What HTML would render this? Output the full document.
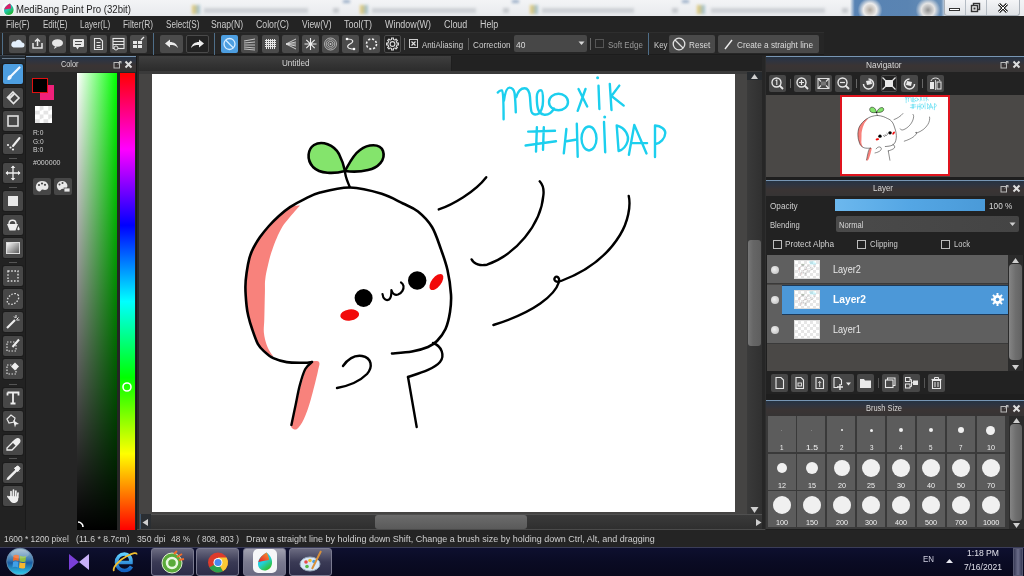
<!DOCTYPE html>
<html><head><meta charset="utf-8">
<style>
*{box-sizing:border-box;margin:0;padding:0}
html,body{width:1024px;height:576px;overflow:hidden;background:#1e1e1e;font-family:"Liberation Sans",sans-serif}
.a{position:absolute}
.t{position:absolute;white-space:pre;line-height:1;transform-origin:0 0;font-family:"Liberation Sans",sans-serif}
</style></head><body>
<div class="a" style="left:0px;top:0px;width:1024px;height:16px;background:linear-gradient(#f3f4f6,#e8eaed)"></div><div class="a" style="left:204px;top:8px;width:104px;height:5px;background:#c4c8cd;filter:blur(1.5px);opacity:.75"></div><div class="a" style="left:372px;top:8px;width:104px;height:5px;background:#c4c8cd;filter:blur(1.5px);opacity:.75"></div><div class="a" style="left:542px;top:8px;width:92px;height:5px;background:#c4c8cd;filter:blur(1.5px);opacity:.75"></div><div class="a" style="left:711px;top:8px;width:114px;height:5px;background:#c4c8cd;filter:blur(1.5px);opacity:.75"></div><div class="a" style="left:333px;top:8px;width:6px;height:5px;background:#b8bcc0;filter:blur(1.5px);opacity:.7"></div><div class="a" style="left:503px;top:8px;width:6px;height:5px;background:#b8bcc0;filter:blur(1.5px);opacity:.7"></div><div class="a" style="left:672px;top:8px;width:6px;height:5px;background:#b8bcc0;filter:blur(1.5px);opacity:.7"></div><div class="a" style="left:842px;top:8px;width:6px;height:5px;background:#b8bcc0;filter:blur(1.5px);opacity:.7"></div><div class="a" style="left:192px;top:5px;width:8px;height:9px;background:linear-gradient(90deg,#e8c040,#80b0d0);filter:blur(1.5px);opacity:.75"></div><div class="a" style="left:360px;top:5px;width:8px;height:9px;background:linear-gradient(90deg,#e8c040,#80b0d0);filter:blur(1.5px);opacity:.75"></div><div class="a" style="left:530px;top:5px;width:8px;height:9px;background:linear-gradient(90deg,#e8c040,#80b0d0);filter:blur(1.5px);opacity:.75"></div><div class="a" style="left:697px;top:5px;width:8px;height:9px;background:linear-gradient(90deg,#e8c040,#80b0d0);filter:blur(1.5px);opacity:.75"></div><div class="a" style="left:343px;top:0px;width:7px;height:3px;background:#6080a8;filter:blur(1.5px);opacity:.6"></div><div class="a" style="left:512px;top:0px;width:7px;height:3px;background:#6080a8;filter:blur(1.5px);opacity:.6"></div><div class="a" style="left:682px;top:0px;width:7px;height:3px;background:#6080a8;filter:blur(1.5px);opacity:.6"></div><div class="a" style="left:850px;top:0px;width:96px;height:16px;background:linear-gradient(90deg,rgba(88,131,180,0),#5883b4 5%,#5a84b2 60%,#6a90b8 95%,rgba(106,144,184,0))"></div><div class="a" style="left:857px;top:-2px;width:26px;height:20px;background:radial-gradient(circle at 50% 60%,#b0a89e 0,#ecebea 38%,rgba(236,235,234,0) 70%)"></div><div class="a" style="left:915px;top:-2px;width:26px;height:20px;background:radial-gradient(circle at 50% 60%,#909090 0,#e4e4e4 38%,rgba(228,228,228,0) 70%)"></div><svg class="a" style="left:1px;top:1px;" width="15" height="15" viewBox="0 0 15 15"><defs><linearGradient id="tbd" x1="0" y1="0" x2=".6" y2="1"><stop offset="0" stop-color="#1aa8c8"/><stop offset=".55" stop-color="#22c8b0"/><stop offset="1" stop-color="#20b030"/></linearGradient></defs><circle cx="7.5" cy="8" r="6.5" fill="#fff" opacity=".7"/><path d="M9 2.5 C12 5 13 7.5 12.5 10 C12 12.5 10 14 7.5 14 C4.5 14 3 12 3 9.5 C3 6.5 5.5 4 9 2.5Z" fill="url(#tbd)"/><path d="M9 2.5 C6.5 3.8 4 5.8 3.2 8.5 C5 8 7.5 8 10 7.5 C10 5.5 9.8 4 9 2.5Z" fill="#d8206a"/></svg><div class="t" style="left:16.30px;top:3.71px;font-size:10.5px;color:#1e1e1e;font-weight:400;transform:scaleX(0.912);">MediBang Paint Pro (32bit)</div><div class="a" style="left:944px;top:0px;width:76px;height:16px;background:linear-gradient(#f4f5f7,#dfe2e6);border:1px solid #a9b0b8;border-top:none;border-radius:0 0 3px 3px"></div><div class="a" style="left:965px;top:0px;width:1px;height:15px;background:#b5bcc4"></div><div class="a" style="left:986px;top:0px;width:1px;height:15px;background:#b5bcc4"></div><div class="a" style="left:949px;top:8px;width:11px;height:3px;background:#fff;border:1px solid #333"></div><svg class="a" style="left:970px;top:2px;" width="12" height="12" viewBox="0 0 12 12"><rect x="3.5" y="1.5" width="6" height="6" fill="none" stroke="#333" stroke-width="1.4"/><rect x="1.5" y="3.5" width="6" height="6" fill="#eee" stroke="#333" stroke-width="1.4"/><rect x="3.5" y="5.5" width="2" height="2" fill="#333"/></svg><svg class="a" style="left:996px;top:2px;" width="14" height="12" viewBox="0 0 14 12"><path d="M3 2 L11 10 M11 2 L3 10" stroke="#222" stroke-width="3"/><path d="M3 2 L11 10 M11 2 L3 10" stroke="#fff" stroke-width="1"/></svg><div class="a" style="left:0px;top:16px;width:1024px;height:16px;background:#232323"></div><div class="t" style="left:6.25px;top:20.34px;font-size:10px;color:#cdcdcd;font-weight:400;transform:scaleX(0.813);">File(F)</div><div class="t" style="left:42.50px;top:20.34px;font-size:10px;color:#cdcdcd;font-weight:400;transform:scaleX(0.802);">Edit(E)</div><div class="t" style="left:79.70px;top:20.34px;font-size:10px;color:#cdcdcd;font-weight:400;transform:scaleX(0.813);">Layer(L)</div><div class="t" style="left:123.00px;top:20.34px;font-size:10px;color:#cdcdcd;font-weight:400;transform:scaleX(0.831);">Filter(R)</div><div class="t" style="left:165.60px;top:20.34px;font-size:10px;color:#cdcdcd;font-weight:400;transform:scaleX(0.812);">Select(S)</div><div class="t" style="left:211.00px;top:20.34px;font-size:10px;color:#cdcdcd;font-weight:400;transform:scaleX(0.859);">Snap(N)</div><div class="t" style="left:256.00px;top:20.34px;font-size:10px;color:#cdcdcd;font-weight:400;transform:scaleX(0.873);">Color(C)</div><div class="t" style="left:301.50px;top:20.34px;font-size:10px;color:#cdcdcd;font-weight:400;transform:scaleX(0.847);">View(V)</div><div class="t" style="left:344.00px;top:20.34px;font-size:10px;color:#cdcdcd;font-weight:400;transform:scaleX(0.900);">Tool(T)</div><div class="t" style="left:385.00px;top:20.34px;font-size:10px;color:#cdcdcd;font-weight:400;transform:scaleX(0.890);">Window(W)</div><div class="t" style="left:443.70px;top:20.34px;font-size:10px;color:#cdcdcd;font-weight:400;transform:scaleX(0.891);">Cloud</div><div class="t" style="left:479.70px;top:20.34px;font-size:10px;color:#cdcdcd;font-weight:400;transform:scaleX(0.889);">Help</div><div class="a" style="left:0px;top:32px;width:1024px;height:24px;background:#232323"></div><div class="a" style="left:0px;top:32px;width:824px;height:23px;background:#262626;border-top:1px solid #2e2e2e;border-bottom:1px solid #1c1c1c"></div><div class="a" style="left:2px;top:33px;width:1px;height:22px;background:#4f6e88"></div><div class="a" style="left:9px;top:35px;width:17px;height:18px;background:#4b4b4b;border-radius:2px;"></div><svg class="a" style="left:9px;top:35px;" width="17" height="18" viewBox="0 0 17 18"><path d="M4.5 12.5 h8.5 a2.5 2.5 0 0 0 0-5 a3.5 3.5 0 0 0-6.5-1 a3 3 0 0 0-2 6z" fill="#e4f0fc"/></svg><div class="a" style="left:29px;top:35px;width:17px;height:18px;background:#4b4b4b;border-radius:2px;"></div><svg class="a" style="left:29px;top:35px;" width="17" height="18" viewBox="0 0 17 18"><path d="M4 8v5h9V8" fill="none" stroke="#e8e8e8" stroke-width="1.5"/><path d="M8.5 11V4 M6 6.5l2.5-2.5 2.5 2.5" fill="none" stroke="#e8e8e8" stroke-width="1.5"/></svg><div class="a" style="left:49px;top:35px;width:17px;height:18px;background:#4b4b4b;border-radius:2px;"></div><svg class="a" style="left:49px;top:35px;" width="17" height="18" viewBox="0 0 17 18"><ellipse cx="8.5" cy="8" rx="5.5" ry="3.8" fill="#e8e8e8"/><path d="M6 11l-1 3 3-2z" fill="#e8e8e8"/></svg><div class="a" style="left:70px;top:35px;width:17px;height:18px;background:#4b4b4b;border-radius:2px;"></div><svg class="a" style="left:70px;top:35px;" width="17" height="18" viewBox="0 0 17 18"><rect x="3" y="4" width="11" height="8" rx="1" fill="#e8e8e8"/><path d="M5 6.5h7M5 9.5h6" stroke="#4b4b4b" stroke-width="1"/><path d="M6 12l1.5 2.5 1.5-2.5z" fill="#e8e8e8"/></svg><div class="a" style="left:90px;top:35px;width:17px;height:18px;background:#4b4b4b;border-radius:2px;"></div><svg class="a" style="left:90px;top:35px;" width="17" height="18" viewBox="0 0 17 18"><path d="M4.5 3.5h5.5l2.5 2.5v8.5h-8z" fill="none" stroke="#e8e8e8" stroke-width="1.1"/><path d="M6.5 7.5h4M6.5 10.5h4M6.5 12.5h4" stroke="#e8e8e8" stroke-width="1"/></svg><div class="a" style="left:110px;top:35px;width:17px;height:18px;background:#4b4b4b;border-radius:2px;"></div><svg class="a" style="left:110px;top:35px;" width="17" height="18" viewBox="0 0 17 18"><rect x="3" y="3.5" width="11" height="10" fill="none" stroke="#e8e8e8" stroke-width="1.1"/><path d="M3 6.5h11M3 9.5h11" stroke="#e8e8e8" stroke-width="1"/><circle cx="6" cy="13" r="2" fill="#4b4b4b" stroke="#e8e8e8"/></svg><div class="a" style="left:130px;top:35px;width:17px;height:18px;background:#4b4b4b;border-radius:2px;"></div><svg class="a" style="left:130px;top:35px;" width="17" height="18" viewBox="0 0 17 18"><rect x="3" y="6" width="4" height="3" fill="#e8e8e8"/><rect x="8" y="6" width="4" height="3" fill="#e8e8e8"/><rect x="3" y="10" width="4" height="3" fill="#e8e8e8"/><rect x="8" y="10" width="4" height="3" fill="#e8e8e8"/><path d="M11 5l3-3" stroke="#e8e8e8" stroke-width="1.2"/></svg><div class="a" style="left:153px;top:33px;width:1px;height:22px;background:#4f6e88"></div><div class="a" style="left:160px;top:35px;width:23px;height:18px;background:#4b4b4b;border-radius:2px;"></div><svg class="a" style="left:160px;top:35px;" width="23" height="18" viewBox="0 0 23 18"><path d="M5 8.5 L10 4.5 V7 C14 7 17 9 18 13 C16 10.5 13.5 10 10 10 V12.5 Z" fill="#ececec"/></svg><div class="a" style="left:186px;top:35px;width:23px;height:18px;background:#222;border-radius:2px;border:1px solid #4a4a4a"></div><svg class="a" style="left:186px;top:35px;" width="23" height="18" viewBox="0 0 23 18"><path d="M18 8.5 L13 4.5 V7 C9 7 6 9 5 13 C7 10.5 9.5 10 13 10 V12.5 Z" fill="#ececec"/></svg><div class="a" style="left:214px;top:33px;width:1px;height:22px;background:#4f6e88"></div><div class="a" style="left:221px;top:35px;width:17px;height:18px;background:#4d9ee0;border-radius:2px;"></div><svg class="a" style="left:221px;top:35px;" width="17" height="18" viewBox="0 0 17 18"><circle cx="8.5" cy="9" r="5.5" fill="none" stroke="#d6ecff" stroke-width="1.3"/><path d="M4.8 5.3 L12.2 12.7" stroke="#d6ecff" stroke-width="1.3"/></svg><div class="a" style="left:241px;top:35px;width:17px;height:18px;background:#4b4b4b;border-radius:2px;"></div><svg class="a" style="left:241px;top:35px;" width="17" height="18" viewBox="0 0 17 18"><path d="M3 6 L14 4 M3 8 L14 7 M3 10 L14 10 M3 12 L14 13 M3 14 L14 15" stroke="#cfcfcf" stroke-width="0.9"/></svg><div class="a" style="left:262px;top:35px;width:17px;height:18px;background:#4b4b4b;border-radius:2px;"></div><svg class="a" style="left:262px;top:35px;" width="17" height="18" viewBox="0 0 17 18"><path d="M4.5 4v10M6.5 4v10M8.5 4v10M10.5 4v10M12.5 4v10M3 5.5h11M3 7.5h11M3 9.5h11M3 11.5h11" stroke="#e6e6e6" stroke-width="1"/></svg><div class="a" style="left:282px;top:35px;width:17px;height:18px;background:#4b4b4b;border-radius:2px;"></div><svg class="a" style="left:282px;top:35px;" width="17" height="18" viewBox="0 0 17 18"><path d="M4 9 L14 4 M4 9 L14 7 M4 9 L14 11 M4 9 L14 14 M4 9 L14 9" stroke="#dcdcdc" stroke-width="0.9"/></svg><div class="a" style="left:302px;top:35px;width:17px;height:18px;background:#4b4b4b;border-radius:2px;"></div><svg class="a" style="left:302px;top:35px;" width="17" height="18" viewBox="0 0 17 18"><path d="M8.5 3v12M2.5 9h12M4.3 4.8l8.4 8.4M12.7 4.8l-8.4 8.4" stroke="#eee" stroke-width="1.1"/></svg><div class="a" style="left:322px;top:35px;width:17px;height:18px;background:#4b4b4b;border-radius:2px;"></div><svg class="a" style="left:322px;top:35px;" width="17" height="18" viewBox="0 0 17 18"><circle cx="8.5" cy="9" r="6" fill="none" stroke="#ccc" stroke-width=".8"/><circle cx="8.5" cy="9" r="4.3" fill="none" stroke="#ccc" stroke-width=".8"/><circle cx="8.5" cy="9" r="2.6" fill="none" stroke="#ccc" stroke-width=".8"/><circle cx="8.5" cy="9" r="1" fill="#ccc"/></svg><div class="a" style="left:342px;top:35px;width:17px;height:18px;background:#4b4b4b;border-radius:2px;"></div><svg class="a" style="left:342px;top:35px;" width="17" height="18" viewBox="0 0 17 18"><path d="M5 4 C12 4 12 7 8 9 C4 11 5 14 12 14" fill="none" stroke="#e8e8e8" stroke-width="1.2"/><circle cx="5" cy="4" r="1.3" fill="#fff"/><circle cx="12" cy="14" r="1.3" fill="#fff"/></svg><div class="a" style="left:363px;top:35px;width:17px;height:18px;background:#4b4b4b;border-radius:2px;"></div><svg class="a" style="left:363px;top:35px;" width="17" height="18" viewBox="0 0 17 18"><circle cx="8.5" cy="9" r="5" fill="none" stroke="#f0f0f0" stroke-width="1.6" stroke-dasharray="2.2 1.7"/></svg><div class="a" style="left:384px;top:35px;width:17px;height:18px;background:#222;border-radius:2px;border:1px solid #4a4a4a"></div><svg class="a" style="left:384px;top:35px;" width="17" height="18" viewBox="0 0 17 18"><path d="M13.01,8.10 L14.43,8.06 L14.43,9.94 L13.01,9.90 L12.32,11.56 L13.35,12.53 L12.03,13.85 L11.06,12.82 L9.40,13.51 L9.44,14.93 L7.56,14.93 L7.60,13.51 L5.94,12.82 L4.97,13.85 L3.65,12.53 L4.68,11.56 L3.99,9.90 L2.57,9.94 L2.57,8.06 L3.99,8.10 L4.68,6.44 L3.65,5.47 L4.97,4.15 L5.94,5.18 L7.60,4.49 L7.56,3.07 L9.44,3.07 L9.40,4.49 L11.06,5.18 L12.03,4.15 L13.35,5.47 L12.32,6.44Z" fill="none" stroke="#ddd" stroke-width="1.1"/><circle cx="8.5" cy="9" r="2.4" fill="none" stroke="#ddd" stroke-width="1.1"/></svg><div class="a" style="left:404px;top:38px;width:1px;height:12px;background:#666"></div><div class="a" style="left:409px;top:39px;width:9px;height:9px;border:1px solid #cfcfcf"></div><svg class="a" style="left:409px;top:39px;" width="9" height="9" viewBox="0 0 9 9"><path d="M2.5 2.5l4 4M6.5 2.5l-4 4" stroke="#ddd" stroke-width="1.2"/></svg><div class="t" style="left:421.90px;top:39.56px;font-size:9.5px;color:#cfcfcf;font-weight:400;transform:scaleX(0.826);">AntiAliasing</div><div class="a" style="left:468px;top:38px;width:1px;height:12px;background:#555"></div><div class="t" style="left:473.40px;top:39.56px;font-size:9.5px;color:#cfcfcf;font-weight:400;transform:scaleX(0.858);">Correction</div><div class="a" style="left:514px;top:35px;width:73px;height:17px;background:#474747;border-radius:2px"></div><div class="t" style="left:515.60px;top:39.56px;font-size:9.5px;color:#dcdcdc;font-weight:400;transform:scaleX(0.889);">40</div><svg class="a" style="left:578px;top:41px;" width="8" height="5" viewBox="0 0 8 5"><path d="M0.5 0.5h6l-3 3.5z" fill="#d8d8d8"/></svg><div class="a" style="left:590px;top:38px;width:1px;height:12px;background:#666"></div><div class="a" style="left:595px;top:39px;width:9px;height:9px;border:1px solid #555"></div><div class="t" style="left:607.90px;top:39.56px;font-size:9.5px;color:#9a9a9a;font-weight:400;transform:scaleX(0.834);">Soft Edge</div><div class="a" style="left:648px;top:33px;width:1px;height:22px;background:#4f6e88"></div><div class="t" style="left:653.50px;top:39.56px;font-size:9.5px;color:#cfcfcf;font-weight:400;transform:scaleX(0.824);">Key</div><div class="a" style="left:669px;top:35px;width:46px;height:18px;background:#4a4a4a;border-radius:2px;"></div><svg class="a" style="left:671px;top:36px;" width="16" height="16" viewBox="0 0 16 16"><circle cx="8" cy="8" r="5.8" fill="none" stroke="#e0e0e0" stroke-width="1.3"/><path d="M4 4l8 8" stroke="#e0e0e0" stroke-width="1.3"/></svg><div class="t" style="left:688.70px;top:39.56px;font-size:9.5px;color:#dcdcdc;font-weight:400;transform:scaleX(0.858);">Reset</div><div class="a" style="left:718px;top:35px;width:101px;height:18px;background:#4a4a4a;border-radius:2px;"></div><svg class="a" style="left:723px;top:37px;" width="12" height="14" viewBox="0 0 12 14"><path d="M2 12 L9 3" stroke="#eee" stroke-width="1.4"/></svg><div class="t" style="left:737.00px;top:39.56px;font-size:9.5px;color:#dcdcdc;font-weight:400;transform:scaleX(0.867);">Create a straight line</div><div class="a" style="left:0px;top:56px;width:26px;height:474px;background:#222"></div><div class="a" style="left:0px;top:56px;width:25px;height:8px;background:#222a32"></div><div class="a" style="left:2px;top:58px;width:23px;height:1px;background:#6a7c8e"></div><div class="a" style="left:0px;top:55px;width:25px;height:1px;background:#3a4048"></div><div class="a" style="left:25px;top:56px;width:1px;height:474px;background:#1a1a1a"></div><div class="a" style="left:3px;top:64px;width:20px;height:20px;background:#4d9ee0;border-radius:2px;box-shadow:0 0 0 1px #1c1c1c"></div><svg class="a" style="left:3px;top:64px;" width="20" height="20" viewBox="0 0 20 20"><path d="M16.5 3.5 L8 12" stroke="#f2f8ff" stroke-width="2.2" stroke-linecap="round"/><path d="M8.5 11.5 C6 10.5 4 12.5 4.5 16 C7 16.5 9.5 14.5 8.5 11.5Z" fill="#f2f8ff"/></svg><div class="a" style="left:3px;top:88px;width:20px;height:20px;background:#474747;border-radius:2px;box-shadow:0 0 0 1px #1c1c1c"></div><svg class="a" style="left:3px;top:88px;" width="20" height="20" viewBox="0 0 20 20"><path d="M10 4 L16 10 L10.5 15.5 L4.5 9.5Z" fill="none" stroke="#e6e6e6" stroke-width="1.6"/><path d="M7.2 12.2 L10.5 15.5 L4.5 9.5 L7.2 6.8Z" fill="#e6e6e6"/><path d="M6 11 L11.2 5.8" stroke="#e6e6e6" stroke-width="2"/></svg><div class="a" style="left:3px;top:111px;width:20px;height:20px;background:#474747;border-radius:2px;box-shadow:0 0 0 1px #1c1c1c"></div><svg class="a" style="left:3px;top:111px;" width="20" height="20" viewBox="0 0 20 20"><rect x="5" y="5" width="10" height="10" fill="none" stroke="#e0e0e0" stroke-width="1.6"/></svg><div class="a" style="left:3px;top:134px;width:20px;height:20px;background:#474747;border-radius:2px;box-shadow:0 0 0 1px #1c1c1c"></div><svg class="a" style="left:3px;top:134px;" width="20" height="20" viewBox="0 0 20 20"><circle cx="5" cy="11" r="1.1" fill="#eee"/><circle cx="7.5" cy="13.5" r="1.1" fill="#eee"/><circle cx="10" cy="15.5" r="1.1" fill="#eee"/><path d="M16.5 4 L10 12" stroke="#eee" stroke-width="2" stroke-linecap="round"/></svg><div class="a" style="left:3px;top:163px;width:20px;height:20px;background:#474747;border-radius:2px;box-shadow:0 0 0 1px #1c1c1c"></div><svg class="a" style="left:3px;top:163px;" width="20" height="20" viewBox="0 0 20 20"><path d="M10 3v14M3 10h14" stroke="#eee" stroke-width="1.3"/><path d="M10 2.5l-2.3 2.5h4.6zM10 17.5l-2.3-2.5h4.6zM2.5 10l2.5-2.3v4.6zM17.5 10l-2.5-2.3v4.6z" fill="#eee"/></svg><div class="a" style="left:3px;top:191px;width:20px;height:20px;background:#474747;border-radius:2px;box-shadow:0 0 0 1px #1c1c1c"></div><svg class="a" style="left:3px;top:191px;" width="20" height="20" viewBox="0 0 20 20"><rect x="5" y="5" width="10" height="10" fill="#e8e8e8"/></svg><div class="a" style="left:3px;top:215px;width:20px;height:20px;background:#474747;border-radius:2px;box-shadow:0 0 0 1px #1c1c1c"></div><svg class="a" style="left:3px;top:215px;" width="20" height="20" viewBox="0 0 20 20"><path d="M4 9 L15 9 L12.5 15.5 L6.5 15.5Z" fill="#eee"/><path d="M6 9 C6 4 13 4 13 9" fill="none" stroke="#eee" stroke-width="1.4"/><path d="M15.5 11 l1.2 3 a1.2 1.2 0 1 1-2.4 0z" fill="#eee"/></svg><div class="a" style="left:3px;top:238px;width:20px;height:20px;background:#474747;border-radius:2px;box-shadow:0 0 0 1px #1c1c1c"></div><svg class="a" style="left:3px;top:238px;" width="20" height="20" viewBox="0 0 20 20"><defs><linearGradient id="gg" x1="0" y1="0" x2="1" y2="1"><stop offset="0" stop-color="#fff"/><stop offset="1" stop-color="#555"/></linearGradient></defs><rect x="3.5" y="4.5" width="13" height="11" fill="url(#gg)" stroke="#ddd" stroke-width="1"/></svg><div class="a" style="left:3px;top:266px;width:20px;height:20px;background:#474747;border-radius:2px;box-shadow:0 0 0 1px #1c1c1c"></div><svg class="a" style="left:3px;top:266px;" width="20" height="20" viewBox="0 0 20 20"><rect x="5" y="5" width="10" height="10" fill="none" stroke="#ddd" stroke-width="1.4" stroke-dasharray="1.6 1.6"/></svg><div class="a" style="left:3px;top:289px;width:20px;height:20px;background:#474747;border-radius:2px;box-shadow:0 0 0 1px #1c1c1c"></div><svg class="a" style="left:3px;top:289px;" width="20" height="20" viewBox="0 0 20 20"><ellipse cx="10" cy="10" rx="6.5" ry="4.5" transform="rotate(-40 10 10)" fill="none" stroke="#ddd" stroke-width="1.3" stroke-dasharray="1.5 1.5"/></svg><div class="a" style="left:3px;top:312px;width:20px;height:20px;background:#474747;border-radius:2px;box-shadow:0 0 0 1px #1c1c1c"></div><svg class="a" style="left:3px;top:312px;" width="20" height="20" viewBox="0 0 20 20"><path d="M4 16 L12 8" stroke="#eee" stroke-width="2.2"/><path d="M13 3v3M15.5 5.5l-2 2M16.5 8h-3M11 4.5l1.5 1.5" stroke="#eee" stroke-width="1"/></svg><div class="a" style="left:3px;top:336px;width:20px;height:20px;background:#474747;border-radius:2px;box-shadow:0 0 0 1px #1c1c1c"></div><svg class="a" style="left:3px;top:336px;" width="20" height="20" viewBox="0 0 20 20"><rect x="4" y="6" width="9" height="9" fill="none" stroke="#ddd" stroke-width="1.2" stroke-dasharray="1.5 1.5"/><path d="M16 3.5 L9.5 11" stroke="#eee" stroke-width="2"/></svg><div class="a" style="left:3px;top:359px;width:20px;height:20px;background:#474747;border-radius:2px;box-shadow:0 0 0 1px #1c1c1c"></div><svg class="a" style="left:3px;top:359px;" width="20" height="20" viewBox="0 0 20 20"><rect x="4" y="6" width="9" height="9" fill="none" stroke="#ddd" stroke-width="1.2" stroke-dasharray="1.5 1.5"/><path d="M12 3.5 L16 7.5 L12 11.5 L8 7.5Z" fill="#eee"/></svg><div class="a" style="left:3px;top:388px;width:20px;height:20px;background:#474747;border-radius:2px;box-shadow:0 0 0 1px #1c1c1c"></div><svg class="a" style="left:3px;top:388px;" width="20" height="20" viewBox="0 0 20 20"><path d="M4.5 4.5h11v3M4.5 4.5v3M10 4.5v11M7.5 15.5h5" fill="none" stroke="#eee" stroke-width="1.8"/></svg><div class="a" style="left:3px;top:411px;width:20px;height:20px;background:#474747;border-radius:2px;box-shadow:0 0 0 1px #1c1c1c"></div><svg class="a" style="left:3px;top:411px;" width="20" height="20" viewBox="0 0 20 20"><path d="M4 8 L8 4 L12 7 L11 11 L6 12Z" fill="none" stroke="#e6e6e6" stroke-width="1.2"/><path d="M10 9 L16 13 L13 13.5 L12 16.5Z" fill="#eee"/></svg><div class="a" style="left:3px;top:435px;width:20px;height:20px;background:#474747;border-radius:2px;box-shadow:0 0 0 1px #1c1c1c"></div><svg class="a" style="left:3px;top:435px;" width="20" height="20" viewBox="0 0 20 20"><path d="M16 4 C17.5 5.5 17 7 15.5 8.5 L9 15 L4 15 L4 13 L11.5 5.5 C13 4 14.5 3 16 4Z" fill="none" stroke="#eee" stroke-width="1.3"/><path d="M16 4 C17.5 5.5 17 7 15.5 8.5 L13 11 L9 7 L11.5 5.5 C13 4 14.5 3 16 4Z" fill="#eee"/></svg><div class="a" style="left:3px;top:463px;width:20px;height:20px;background:#474747;border-radius:2px;box-shadow:0 0 0 1px #1c1c1c"></div><svg class="a" style="left:3px;top:463px;" width="20" height="20" viewBox="0 0 20 20"><path d="M14 6 L5 15 L4.5 16 L5.5 16 L14.5 7" fill="none" stroke="#eee" stroke-width="1.4"/><path d="M12 4.5 L16 8.5 M13.5 3.5 C15 2 18 5 16.5 6.5 L14.5 8.5 L11.5 5.5Z" fill="#eee" stroke="#eee" stroke-width="1"/></svg><div class="a" style="left:3px;top:486px;width:20px;height:20px;background:#474747;border-radius:2px;box-shadow:0 0 0 1px #1c1c1c"></div><svg class="a" style="left:3px;top:486px;" width="20" height="20" viewBox="0 0 20 20"><path d="M8 11 L8 5.5 M10.3 10.5 L10.5 4 M12.6 10.5 L12.9 5 M14.6 11.5 L15 7" stroke="#f0f0f0" stroke-width="1.7" stroke-linecap="round"/><path d="M7 10 L15.5 10.5 L15 14.5 C14 16.5 12.5 17 10.5 17 C8.5 17 7.5 15.5 6.5 14 L4.2 11 C3.8 10 4.8 9.5 5.5 10.2Z" fill="#f0f0f0"/></svg><div class="a" style="left:9px;top:158px;width:8px;height:1px;background:#555"></div><div class="a" style="left:9px;top:187px;width:8px;height:1px;background:#555"></div><div class="a" style="left:9px;top:262px;width:8px;height:1px;background:#555"></div><div class="a" style="left:9px;top:384px;width:8px;height:1px;background:#555"></div><div class="a" style="left:9px;top:458px;width:8px;height:1px;background:#555"></div><div class="a" style="left:26px;top:56px;width:111px;height:474px;background:#252525"></div><div class="a" style="left:26px;top:56px;width:111px;height:16px;background:linear-gradient(#243242 0,#2f3440 30%,#3a3434 60%,#363434)"></div><div class="a" style="left:26px;top:56px;width:111px;height:1px;background:#7896b4"></div><div class="t" style="left:60.60px;top:60.38px;font-size:9px;color:#d8d8d8;font-weight:400;transform:scaleX(0.809);">Color</div><svg class="a" style="left:113px;top:60px;" width="9" height="9" viewBox="0 0 9 9"><rect x="1" y="2.5" width="5.5" height="5.5" fill="none" stroke="#bbb" stroke-width="1"/><path d="M5 4.5L8 1.5M6 1.5h2v2" fill="none" stroke="#bbb" stroke-width="1"/></svg><svg class="a" style="left:124px;top:60px;" width="9" height="9" viewBox="0 0 9 9"><path d="M1.5 1.5l6 6M7.5 1.5l-6 6" stroke="#ddd" stroke-width="2"/></svg><div class="a" style="left:136px;top:56px;width:1px;height:474px;background:#1a1a1a"></div><div class="a" style="left:40px;top:85px;width:14px;height:15px;background:#f0207a"></div><div class="a" style="left:32px;top:78px;width:16px;height:15px;background:#000;border:1.5px solid #e01010"></div><div class="a" style="left:35px;top:106px;width:17px;height:17px;background:conic-gradient(#e4e4e4 25%,#fff 0 50%,#e4e4e4 0 75%,#fff 0) 0 0/8.5px 8.5px"></div><div class="t" style="left:32.50px;top:129.23px;font-size:8px;color:#d0d0d0;font-weight:400;transform:scaleX(0.835);">R:0</div><div class="t" style="left:32.50px;top:137.83px;font-size:8px;color:#d0d0d0;font-weight:400;transform:scaleX(0.821);">G:0</div><div class="t" style="left:32.50px;top:146.03px;font-size:8px;color:#d0d0d0;font-weight:400;transform:scaleX(0.866);">B:0</div><div class="t" style="left:32.50px;top:159.13px;font-size:8px;color:#d0d0d0;font-weight:400;transform:scaleX(0.883);">#000000</div><div class="a" style="left:33px;top:178px;width:18px;height:17px;background:#474747;border-radius:2px"></div><svg class="a" style="left:33px;top:178px;" width="18" height="17" viewBox="0 0 18 17"><path d="M9 3 C4 3 2.5 7 3 10 C3.5 13 7 14.5 8 12.5 C9 10.5 10.5 12 12 12 C15 12 16 9 15 6.5 C14 4 12 3 9 3Z" fill="#e8e8e8"/><circle cx="6" cy="7" r="1.1" fill="#474747"/><circle cx="9" cy="5.5" r="1.1" fill="#474747"/><circle cx="12" cy="6.8" r="1.1" fill="#474747"/></svg><div class="a" style="left:54px;top:178px;width:18px;height:17px;background:#474747;border-radius:2px"></div><svg class="a" style="left:54px;top:178px;" width="18" height="17" viewBox="0 0 18 17"><path d="M8 3 C4 3 2.5 6.5 3 9 C3.5 12 6 13 7 11.5 C8 10 9 11 10 11 C13 11 14 8.5 13 6 C12 4 10.5 3 8 3Z" fill="#e8e8e8"/><circle cx="5.5" cy="6.5" r="1" fill="#474747"/><circle cx="8.5" cy="5" r="1" fill="#474747"/><rect x="10" y="10" width="6" height="4" fill="#e8e8e8" stroke="#474747" stroke-width=".8"/></svg><div class="a" style="left:77px;top:73px;width:40px;height:457px;background:linear-gradient(rgba(0,0,0,0),#000),linear-gradient(90deg,#fff,#00ff00)"></div><svg class="a" style="left:74px;top:519px;" width="12" height="12" viewBox="0 0 12 12"><path d="M4 3 A5 5 0 0 1 9 8" fill="none" stroke="#fff" stroke-width="1.6"/></svg><div class="a" style="left:120px;top:73px;width:15px;height:457px;background:linear-gradient(#ff0000 0%,#ff00ff 16.67%,#0000ff 33.33%,#00ffff 50%,#00ff00 66.67%,#ffff00 83.33%,#ff0000 100%)"></div><svg class="a" style="left:121px;top:381px;" width="12" height="12" viewBox="0 0 12 12"><circle cx="6" cy="6" r="4" fill="none" stroke="#fff" stroke-width="1.6"/></svg><div class="a" style="left:137px;top:56px;width:628px;height:474px;background:#454443"></div><div class="a" style="left:137px;top:56px;width:628px;height:15px;background:#222"></div><div class="a" style="left:139px;top:56px;width:313px;height:15px;background:linear-gradient(#3f3f3f,#333 60%,#2c2c2c);border-right:1px solid #1e1e1e"></div><div class="t" style="left:281.50px;top:59.18px;font-size:9px;color:#d4d4d4;font-weight:400;transform:scaleX(0.901);">Untitled</div><div class="a" style="left:137px;top:71px;width:628px;height:3px;background:#3a3a3a"></div><div class="a" style="left:137px;top:56px;width:2px;height:474px;background:#2a2a2a"></div><div class="a" style="left:152px;top:74px;width:583px;height:438px;background:#fff"></div><svg class="a" style="left:152px;top:74px" width="583" height="438" viewBox="152 74 583 438">
<g fill="none" stroke-linecap="round" stroke-linejoin="round">
<path d="M300.0,205.5 C298.1,207.6 291.9,214.6 288.9,218.2 C285.9,221.8 284.2,223.8 282.2,227.1 C280.2,230.4 278.3,234.7 276.7,238.2 C275.1,241.7 274.0,244.7 272.8,248.2 C271.6,251.7 270.6,254.3 269.4,259.3 C268.2,264.3 266.1,272.6 265.4,278.2 C264.6,283.8 265.1,285.8 264.9,292.7 C264.7,299.6 264.5,312.6 264.3,319.3 C264.1,326.0 263.5,328.4 263.9,332.7 C264.3,337.0 265.6,341.6 266.7,344.9 C267.8,348.2 269.6,350.8 270.6,352.7 C271.7,354.6 274.0,356.7 273.0,356.5 C272.0,356.3 266.9,353.7 264.4,351.6 C261.9,349.5 259.8,347.5 257.8,343.8 C255.8,340.1 253.8,333.9 252.2,329.3 C250.6,324.7 249.2,319.9 248.3,316.0 C247.4,312.1 247.1,310.8 246.6,306.0 C246.1,301.2 245.4,292.7 245.4,287.1 C245.4,281.6 245.9,277.5 246.6,272.7 C247.3,267.9 248.3,262.3 249.4,258.2 C250.5,254.1 251.5,251.7 253.3,248.2 C255.1,244.7 257.4,240.8 260.0,237.1 C262.6,233.4 265.8,229.5 268.9,226.0 C272.0,222.5 275.4,219.2 278.9,216.0 C282.4,212.8 286.5,208.8 290.0,207.1 C293.5,205.3 298.3,205.8 300.0,205.5 Z" fill="#f8827c" stroke="none"/>
<path d="M311.0,361.5 C312.3,361.6 317.9,360.3 319.0,362.0 C320.1,363.7 319.2,365.5 317.8,371.7 C316.4,377.9 313.1,391.5 310.8,399.4 C308.5,407.3 306.2,414.0 303.9,418.9 C301.6,423.8 299.0,427.5 297.0,429.0 C295.0,430.5 292.8,428.8 292.0,428.0 C291.2,427.2 291.3,427.8 292.0,424.0 C292.7,420.2 294.5,411.5 296.0,405.0 C297.5,398.5 299.3,391.0 301.0,385.0 C302.7,379.0 304.3,372.9 306.0,369.0 C307.7,365.1 310.2,362.8 311.0,361.5 Z" fill="#f8827c" stroke="none"/>
<path d="M345,171 C334,174 320,174 313,167 C306,159 308,149 314,145 C322,140 334,145 339,154 C342,160 344,166 345,171 Z" fill="#84e46c" stroke="#000" stroke-width="2.6"/>
<path d="M345,171 C350,162 353,155 360,150 C368,144 380,143 383,151 C386,160 378,168 368,170 C360,172 352,172 345,171 Z" fill="#84e46c" stroke="#000" stroke-width="2.6"/>
<path d="M345,171 C345,177 348,182 349.7,187" stroke="#000" stroke-width="2.4"/>
<path d="M392.0,353.5 C395.3,353.2 406.0,352.6 412.0,351.5 C418.0,350.4 423.8,348.8 428.0,347.0 C432.2,345.2 434.1,344.0 437.0,341.0 C439.9,338.0 443.3,333.8 445.5,329.0 C447.7,324.2 449.1,317.7 450.0,312.0 C450.9,306.3 451.4,301.6 451.0,294.6 C450.6,287.6 449.2,277.5 447.5,270.0 C445.8,262.5 443.6,256.6 441.0,249.4 C438.4,242.2 435.8,233.3 432.0,227.0 C428.2,220.7 422.8,215.4 418.0,211.5 C413.2,207.6 409.1,206.4 403.0,203.5 C396.9,200.6 390.5,196.5 381.7,193.8 C372.9,191.1 360.3,187.7 350.0,187.5 C339.7,187.3 327.7,190.6 320.0,192.6 C312.3,194.6 309.0,196.9 304.0,199.3 C299.0,201.7 294.2,204.3 290.0,207.1 C285.8,209.9 282.4,212.8 278.9,216.0 C275.4,219.2 272.0,222.5 268.9,226.0 C265.8,229.5 262.6,233.4 260.0,237.1 C257.4,240.8 255.1,244.7 253.3,248.2 C251.5,251.7 250.5,254.1 249.4,258.2 C248.3,262.3 247.3,267.9 246.6,272.7 C245.9,277.5 245.4,281.6 245.4,287.1 C245.4,292.7 246.1,301.2 246.6,306.0 C247.1,310.8 247.4,312.1 248.3,316.0 C249.2,319.9 250.6,324.7 252.2,329.3 C253.8,333.9 255.8,340.1 257.8,343.8 C259.8,347.5 261.8,349.2 264.4,351.6 C267.0,354.0 269.6,356.4 273.3,358.2 C277.0,359.9 281.6,361.4 286.7,362.1 C291.8,362.9 299.8,362.7 304.0,362.7 C308.2,362.7 310.7,362.1 312.0,362.0" stroke="#000" stroke-width="2.6"/>
<path d="M312.0,362.0 C310.9,363.2 307.4,365.1 305.3,369.0 C303.2,372.9 301.3,379.6 299.7,385.6 C298.1,391.6 297.0,398.4 295.6,405.0 C294.2,411.6 292.1,421.7 291.4,425.0" stroke="#000" stroke-width="2.4"/>
<path d="M433,343 C442,346 445,356 440,362 C434,369 420,373 408,377" stroke="#000" stroke-width="2.4"/>
<path d="M408,377 L416.7,427" stroke="#000" stroke-width="2.4"/>
<path d="M343,366 C348,359 355,355 362,356 C372,358 373,367 367,374 C360,381 348,386 337,388" stroke="#000" stroke-width="2.4"/>
<circle cx="363.6" cy="298" r="9" fill="#000" stroke="none"/>
<circle cx="417.2" cy="280.5" r="9.2" fill="#000" stroke="none"/>
<ellipse cx="349.7" cy="315" rx="9.5" ry="5.6" transform="rotate(-8 349.7 315)" fill="#f20a0a" stroke="none"/>
<ellipse cx="436.4" cy="282" rx="9.5" ry="4.8" transform="rotate(-52 436.4 282)" fill="#f20a0a" stroke="none"/>
<path d="M382.5,294 C383,299 386,301 389,299.5 C391,298 391.5,293 391.4,290 C392.5,294 395,295.5 398,294.5 C402,293 404,289 403.5,286 C403,284 402,283 401,282.5" stroke="#000" stroke-width="2.2"/>
<path d="M438.75,209.4 C452,205 475,192 486.25,177.2" stroke="#000" stroke-width="2.4"/>
<path d="M539.7,181.3 C543,185 544,190 543.4,195 C541,225 515,255 487,264.7 C480,266 474,264 471.6,259.4" stroke="#000" stroke-width="2.4"/>
<path d="M628.75,196 C631,206 628,222 620,235 C606,258 585,272 561,281 C556,283 553,280 555,277.5 C557,275 560,278 559,282 C555,295 535,312 493.4,325" stroke="#000" stroke-width="2.4"/>
</g>
<g fill="none" stroke="#1ccfee" stroke-width="2.4" stroke-linecap="round" stroke-linejoin="round">
<path d="M497.8,92.5 C499,91 500.5,90 502,90.5 C503.5,92 503.6,100 503.6,119.3 M503.9,100.9 C505,93 507,87.6 509.3,87.6 C512,87.6 514,89.5 514.6,93.3 C515.3,99 515.6,106 515.8,112.4 M516.2,97.1 C518,91 521,88.3 524.6,88.3 C528,88.3 529.5,92 530,97.1 C530.5,103 530.5,109 531.5,111.6 C532.5,114 535,115 537.5,114.2 C541,113 543,107 543,100.9 C543,95 542.5,90.2 541,90.2 C538.5,90.2 536.8,93 536.8,97.1 C536.8,101 536.8,105 538,109 C539,112 541,114 544,114.7 C548,115.2 551.5,113 554,108.6"/>
<ellipse cx="558.5" cy="102" rx="9.5" ry="8.3"/>
<path d="M578.5,89 L587.2,106.5 M585.5,89 L577.7,110.8"/>
<path d="M598.5,85.6 L599.4,109"/>
<path d="M609.8,83.9 L611.5,110 M619.3,85.6 L611.5,96 L623.7,105.6"/>
<path d="M528.2,131.6 L555,130.8 M525.6,145.5 L556,141.2 M536.9,127.3 L536,151.6 M543.8,127.3 L543,149.9"/>
<path d="M566.4,129 L563.8,153.3 M576.8,123.8 L577.7,156.8 M565,141.5 L577,139.5"/>
<ellipse cx="589" cy="138.5" rx="7.5" ry="12"/>
<path d="M604,121.9 L605.2,152.2"/>
<path d="M616.7,125.5 L618.6,151 M616.7,125.5 C626,128 629,136 627.7,141 C626,147 622,150 618.6,151"/>
<path d="M634.3,124.9 L628.9,154.7 M634.3,124.9 L646.5,153.5 M632,143.1 L647.1,143.1"/>
<path d="M655,125.5 L655,157 M655,125.5 C661,126 665.3,129 665.3,133 C665,139 660,143 656.2,143.7"/>
</g>
<g fill="#1ccfee"><circle cx="597.6" cy="77.8" r="1.5"/><circle cx="604.7" cy="117" r="1.5"/></g>
</svg><div class="a" style="left:747px;top:72px;width:15px;height:442px;background:linear-gradient(90deg,#3a3a3a,#303030)"></div><div class="a" style="left:747px;top:72px;width:15px;height:8px;background:#262a2e"></div><svg class="a" style="left:750px;top:73px;" width="9" height="7" viewBox="0 0 9 7"><path d="M4.5 1 L8 6 H1Z" fill="#cfcfcf"/></svg><div class="a" style="left:748px;top:240px;width:13px;height:106px;background:linear-gradient(90deg,#777,#666 40%,#5e5e5e);border-radius:3px"></div><svg class="a" style="left:749px;top:506px;" width="11" height="8" viewBox="0 0 11 8"><path d="M5.5 7 L9.5 1 H1.5Z" fill="#cfcfcf"/></svg><div class="a" style="left:762px;top:56px;width:4px;height:474px;background:#262626"></div><div class="a" style="left:140px;top:514px;width:622px;height:16px;background:linear-gradient(#3a3a3a,#2e2e2e);border-top:1px solid #505050"></div><div class="a" style="left:140px;top:514px;width:11px;height:16px;background:#2a2e32;border-left:1px solid #405870"></div><svg class="a" style="left:141px;top:518px;" width="9" height="9" viewBox="0 0 9 9"><path d="M1.5 4.5 L7 1 V8Z" fill="#cfcfcf"/></svg><div class="a" style="left:375px;top:515px;width:152px;height:14px;background:linear-gradient(#6c6c6c,#5a5a5a);border-radius:3px"></div><svg class="a" style="left:754px;top:518px;" width="9" height="9" viewBox="0 0 9 9"><path d="M7.5 4.5 L2 1 V8Z" fill="#cfcfcf"/></svg><div class="a" style="left:137px;top:529px;width:628px;height:1px;background:#4a4a4a"></div><div class="a" style="left:765px;top:56px;width:259px;height:474px;background:#1f1f1f"></div><div class="a" style="left:765px;top:56px;width:1px;height:474px;background:#2e2e2e"></div><div class="a" style="left:766px;top:56px;width:258px;height:16px;background:linear-gradient(#243242 0,#2f3440 30%,#3a3434 60%,#363434)"></div><div class="a" style="left:766px;top:56px;width:258px;height:1px;background:#7896b4"></div><div class="t" style="left:865.70px;top:60.98px;font-size:9px;color:#d8d8d8;font-weight:400;transform:scaleX(0.924);">Navigator</div><svg class="a" style="left:1000px;top:60px;" width="9" height="9" viewBox="0 0 9 9"><rect x="1" y="2.5" width="5.5" height="5.5" fill="none" stroke="#bbb" stroke-width="1"/><path d="M5 4.5L8 1.5M6 1.5h2v2" fill="none" stroke="#bbb" stroke-width="1"/></svg><svg class="a" style="left:1012px;top:60px;" width="9" height="9" viewBox="0 0 9 9"><path d="M1.5 1.5l6 6M7.5 1.5l-6 6" stroke="#ddd" stroke-width="2"/></svg><div class="a" style="left:766px;top:72px;width:258px;height:23px;background:#222"></div><div class="a" style="left:769px;top:75px;width:17px;height:17px;background:#474747;border-radius:2px;"></div><svg class="a" style="left:769px;top:75px;" width="17" height="17" viewBox="0 0 17 17"><circle cx="7.5" cy="7.5" r="4.5" fill="none" stroke="#e8e8e8" stroke-width="1.4"/><path d="M10.5 10.5 L14 14" stroke="#e8e8e8" stroke-width="1.8"/><path d="M6.5 5.5 L7.8 5 V10" fill="none" stroke="#e8e8e8" stroke-width="1.1"/></svg><div class="a" style="left:794px;top:75px;width:17px;height:17px;background:#474747;border-radius:2px;"></div><svg class="a" style="left:794px;top:75px;" width="17" height="17" viewBox="0 0 17 17"><circle cx="7.5" cy="7.5" r="4.5" fill="none" stroke="#e8e8e8" stroke-width="1.4"/><path d="M10.5 10.5 L14 14" stroke="#e8e8e8" stroke-width="1.8"/><path d="M5 7.5h5M7.5 5v5" stroke="#e8e8e8" stroke-width="1.2"/></svg><div class="a" style="left:815px;top:75px;width:17px;height:17px;background:#474747;border-radius:2px;"></div><svg class="a" style="left:815px;top:75px;" width="17" height="17" viewBox="0 0 17 17"><rect x="3" y="3.5" width="11" height="10" fill="none" stroke="#e0e0e0" stroke-width="1"/><path d="M3 3.5l3 3M14 3.5l-3 3M3 13.5l3-3M14 13.5l-3-3" stroke="#e0e0e0" stroke-width="1.2"/><rect x="6" y="6.5" width="5" height="4" fill="#777"/></svg><div class="a" style="left:835px;top:75px;width:17px;height:17px;background:#474747;border-radius:2px;"></div><svg class="a" style="left:835px;top:75px;" width="17" height="17" viewBox="0 0 17 17"><circle cx="7.5" cy="7.5" r="4.5" fill="none" stroke="#e8e8e8" stroke-width="1.4"/><path d="M10.5 10.5 L14 14" stroke="#e8e8e8" stroke-width="1.8"/><path d="M5 7.5h5" stroke="#e8e8e8" stroke-width="1.2"/></svg><div class="a" style="left:860px;top:75px;width:17px;height:17px;background:#474747;border-radius:2px;"></div><svg class="a" style="left:860px;top:75px;" width="17" height="17" viewBox="0 0 17 17"><path d="M3.5 9 A5 5 0 1 0 8.5 4" fill="none" stroke="#e8e8e8" stroke-width="1.5"/><path d="M6 6 l5-1 1 4 -5 1z" fill="#e8e8e8"/></svg><div class="a" style="left:881px;top:75px;width:16px;height:17px;background:#232323;border-radius:2px;border:1px solid #4a4a4a;"></div><svg class="a" style="left:881px;top:75px;" width="17" height="17" viewBox="0 0 17 17"><rect x="4" y="5" width="8" height="7" fill="#e8e8e8"/><path d="M1.5 2.5l3 3M14.5 2.5l-3 3M1.5 14.5l3-3M14.5 14.5l-3-3" stroke="#e8e8e8" stroke-width="1.2"/></svg><div class="a" style="left:901px;top:75px;width:17px;height:17px;background:#474747;border-radius:2px;"></div><svg class="a" style="left:901px;top:75px;" width="17" height="17" viewBox="0 0 17 17"><path d="M13.5 9 A5 5 0 1 1 8.5 4" fill="none" stroke="#e8e8e8" stroke-width="1.5"/><path d="M6 6 l5 1 -1 4 -5-1z" fill="#e8e8e8"/></svg><div class="a" style="left:927px;top:75px;width:17px;height:17px;background:#474747;border-radius:2px;"></div><svg class="a" style="left:927px;top:75px;" width="17" height="17" viewBox="0 0 17 17"><rect x="3" y="7" width="4" height="7" fill="#e8e8e8"/><rect x="10" y="7" width="4" height="7" fill="none" stroke="#e8e8e8" stroke-width="1"/><path d="M8.5 5v10" stroke="#e8e8e8" stroke-width=".8"/><path d="M4 6 C5 2 12 2 13 6" fill="none" stroke="#e8e8e8" stroke-width="1"/></svg><div class="a" style="left:790px;top:79px;width:1px;height:9px;background:#666"></div><div class="a" style="left:856px;top:79px;width:1px;height:9px;background:#666"></div><div class="a" style="left:922px;top:79px;width:1px;height:9px;background:#666"></div><div class="a" style="left:766px;top:95px;width:258px;height:82px;background:#4a4846"></div><div class="a" style="left:840px;top:95px;width:110px;height:81px;background:#fff;border:2px solid #e0141e"></div><svg class="a" style="left:842px;top:97px" width="106" height="77" viewBox="0 0 106 77"><g transform="translate(-30,-16.6) scale(0.187)">
<g fill="none" stroke-linecap="round" stroke-linejoin="round">
<path d="M300.0,205.5 C298.1,207.6 291.9,214.6 288.9,218.2 C285.9,221.8 284.2,223.8 282.2,227.1 C280.2,230.4 278.3,234.7 276.7,238.2 C275.1,241.7 274.0,244.7 272.8,248.2 C271.6,251.7 270.6,254.3 269.4,259.3 C268.2,264.3 266.1,272.6 265.4,278.2 C264.6,283.8 265.1,285.8 264.9,292.7 C264.7,299.6 264.5,312.6 264.3,319.3 C264.1,326.0 263.5,328.4 263.9,332.7 C264.3,337.0 265.6,341.6 266.7,344.9 C267.8,348.2 269.6,350.8 270.6,352.7 C271.7,354.6 274.0,356.7 273.0,356.5 C272.0,356.3 266.9,353.7 264.4,351.6 C261.9,349.5 259.8,347.5 257.8,343.8 C255.8,340.1 253.8,333.9 252.2,329.3 C250.6,324.7 249.2,319.9 248.3,316.0 C247.4,312.1 247.1,310.8 246.6,306.0 C246.1,301.2 245.4,292.7 245.4,287.1 C245.4,281.6 245.9,277.5 246.6,272.7 C247.3,267.9 248.3,262.3 249.4,258.2 C250.5,254.1 251.5,251.7 253.3,248.2 C255.1,244.7 257.4,240.8 260.0,237.1 C262.6,233.4 265.8,229.5 268.9,226.0 C272.0,222.5 275.4,219.2 278.9,216.0 C282.4,212.8 286.5,208.8 290.0,207.1 C293.5,205.3 298.3,205.8 300.0,205.5 Z" fill="#f8827c" stroke="none"/>
<path d="M311.0,361.5 C312.3,361.6 317.9,360.3 319.0,362.0 C320.1,363.7 319.2,365.5 317.8,371.7 C316.4,377.9 313.1,391.5 310.8,399.4 C308.5,407.3 306.2,414.0 303.9,418.9 C301.6,423.8 299.0,427.5 297.0,429.0 C295.0,430.5 292.8,428.8 292.0,428.0 C291.2,427.2 291.3,427.8 292.0,424.0 C292.7,420.2 294.5,411.5 296.0,405.0 C297.5,398.5 299.3,391.0 301.0,385.0 C302.7,379.0 304.3,372.9 306.0,369.0 C307.7,365.1 310.2,362.8 311.0,361.5 Z" fill="#f8827c" stroke="none"/>
<path d="M345,171 C334,174 320,174 313,167 C306,159 308,149 314,145 C322,140 334,145 339,154 C342,160 344,166 345,171 Z" fill="#84e46c" stroke="#000" stroke-width="2.6"/>
<path d="M345,171 C350,162 353,155 360,150 C368,144 380,143 383,151 C386,160 378,168 368,170 C360,172 352,172 345,171 Z" fill="#84e46c" stroke="#000" stroke-width="2.6"/>
<path d="M345,171 C345,177 348,182 349.7,187" stroke="#000" stroke-width="2.4"/>
<path d="M392.0,353.5 C395.3,353.2 406.0,352.6 412.0,351.5 C418.0,350.4 423.8,348.8 428.0,347.0 C432.2,345.2 434.1,344.0 437.0,341.0 C439.9,338.0 443.3,333.8 445.5,329.0 C447.7,324.2 449.1,317.7 450.0,312.0 C450.9,306.3 451.4,301.6 451.0,294.6 C450.6,287.6 449.2,277.5 447.5,270.0 C445.8,262.5 443.6,256.6 441.0,249.4 C438.4,242.2 435.8,233.3 432.0,227.0 C428.2,220.7 422.8,215.4 418.0,211.5 C413.2,207.6 409.1,206.4 403.0,203.5 C396.9,200.6 390.5,196.5 381.7,193.8 C372.9,191.1 360.3,187.7 350.0,187.5 C339.7,187.3 327.7,190.6 320.0,192.6 C312.3,194.6 309.0,196.9 304.0,199.3 C299.0,201.7 294.2,204.3 290.0,207.1 C285.8,209.9 282.4,212.8 278.9,216.0 C275.4,219.2 272.0,222.5 268.9,226.0 C265.8,229.5 262.6,233.4 260.0,237.1 C257.4,240.8 255.1,244.7 253.3,248.2 C251.5,251.7 250.5,254.1 249.4,258.2 C248.3,262.3 247.3,267.9 246.6,272.7 C245.9,277.5 245.4,281.6 245.4,287.1 C245.4,292.7 246.1,301.2 246.6,306.0 C247.1,310.8 247.4,312.1 248.3,316.0 C249.2,319.9 250.6,324.7 252.2,329.3 C253.8,333.9 255.8,340.1 257.8,343.8 C259.8,347.5 261.8,349.2 264.4,351.6 C267.0,354.0 269.6,356.4 273.3,358.2 C277.0,359.9 281.6,361.4 286.7,362.1 C291.8,362.9 299.8,362.7 304.0,362.7 C308.2,362.7 310.7,362.1 312.0,362.0" stroke="#000" stroke-width="2.6"/>
<path d="M312.0,362.0 C310.9,363.2 307.4,365.1 305.3,369.0 C303.2,372.9 301.3,379.6 299.7,385.6 C298.1,391.6 297.0,398.4 295.6,405.0 C294.2,411.6 292.1,421.7 291.4,425.0" stroke="#000" stroke-width="2.4"/>
<path d="M433,343 C442,346 445,356 440,362 C434,369 420,373 408,377" stroke="#000" stroke-width="2.4"/>
<path d="M408,377 L416.7,427" stroke="#000" stroke-width="2.4"/>
<path d="M343,366 C348,359 355,355 362,356 C372,358 373,367 367,374 C360,381 348,386 337,388" stroke="#000" stroke-width="2.4"/>
<circle cx="363.6" cy="298" r="9" fill="#000" stroke="none"/>
<circle cx="417.2" cy="280.5" r="9.2" fill="#000" stroke="none"/>
<ellipse cx="349.7" cy="315" rx="9.5" ry="5.6" transform="rotate(-8 349.7 315)" fill="#f20a0a" stroke="none"/>
<ellipse cx="436.4" cy="282" rx="9.5" ry="4.8" transform="rotate(-52 436.4 282)" fill="#f20a0a" stroke="none"/>
<path d="M382.5,294 C383,299 386,301 389,299.5 C391,298 391.5,293 391.4,290 C392.5,294 395,295.5 398,294.5 C402,293 404,289 403.5,286 C403,284 402,283 401,282.5" stroke="#000" stroke-width="2.2"/>
<path d="M438.75,209.4 C452,205 475,192 486.25,177.2" stroke="#000" stroke-width="2.4"/>
<path d="M539.7,181.3 C543,185 544,190 543.4,195 C541,225 515,255 487,264.7 C480,266 474,264 471.6,259.4" stroke="#000" stroke-width="2.4"/>
<path d="M628.75,196 C631,206 628,222 620,235 C606,258 585,272 561,281 C556,283 553,280 555,277.5 C557,275 560,278 559,282 C555,295 535,312 493.4,325" stroke="#000" stroke-width="2.4"/>
</g>
<g fill="none" stroke="#1ccfee" stroke-width="2.4" stroke-linecap="round" stroke-linejoin="round">
<path d="M497.8,92.5 C499,91 500.5,90 502,90.5 C503.5,92 503.6,100 503.6,119.3 M503.9,100.9 C505,93 507,87.6 509.3,87.6 C512,87.6 514,89.5 514.6,93.3 C515.3,99 515.6,106 515.8,112.4 M516.2,97.1 C518,91 521,88.3 524.6,88.3 C528,88.3 529.5,92 530,97.1 C530.5,103 530.5,109 531.5,111.6 C532.5,114 535,115 537.5,114.2 C541,113 543,107 543,100.9 C543,95 542.5,90.2 541,90.2 C538.5,90.2 536.8,93 536.8,97.1 C536.8,101 536.8,105 538,109 C539,112 541,114 544,114.7 C548,115.2 551.5,113 554,108.6"/>
<ellipse cx="558.5" cy="102" rx="9.5" ry="8.3"/>
<path d="M578.5,89 L587.2,106.5 M585.5,89 L577.7,110.8"/>
<path d="M598.5,85.6 L599.4,109"/>
<path d="M609.8,83.9 L611.5,110 M619.3,85.6 L611.5,96 L623.7,105.6"/>
<path d="M528.2,131.6 L555,130.8 M525.6,145.5 L556,141.2 M536.9,127.3 L536,151.6 M543.8,127.3 L543,149.9"/>
<path d="M566.4,129 L563.8,153.3 M576.8,123.8 L577.7,156.8 M565,141.5 L577,139.5"/>
<ellipse cx="589" cy="138.5" rx="7.5" ry="12"/>
<path d="M604,121.9 L605.2,152.2"/>
<path d="M616.7,125.5 L618.6,151 M616.7,125.5 C626,128 629,136 627.7,141 C626,147 622,150 618.6,151"/>
<path d="M634.3,124.9 L628.9,154.7 M634.3,124.9 L646.5,153.5 M632,143.1 L647.1,143.1"/>
<path d="M655,125.5 L655,157 M655,125.5 C661,126 665.3,129 665.3,133 C665,139 660,143 656.2,143.7"/>
</g>
<g fill="#1ccfee"><circle cx="597.6" cy="77.8" r="1.5"/><circle cx="604.7" cy="117" r="1.5"/></g>
</g></svg><div class="a" style="left:766px;top:177px;width:258px;height:3px;background:#1e1e1e"></div><div class="a" style="left:766px;top:180px;width:258px;height:16px;background:linear-gradient(#243242 0,#2f3440 30%,#3a3434 60%,#363434)"></div><div class="a" style="left:766px;top:180px;width:258px;height:1px;background:#7896b4"></div><div class="t" style="left:873.40px;top:183.98px;font-size:9px;color:#d8d8d8;font-weight:400;transform:scaleX(0.888);">Layer</div><svg class="a" style="left:1000px;top:184px;" width="9" height="9" viewBox="0 0 9 9"><rect x="1" y="2.5" width="5.5" height="5.5" fill="none" stroke="#bbb" stroke-width="1"/><path d="M5 4.5L8 1.5M6 1.5h2v2" fill="none" stroke="#bbb" stroke-width="1"/></svg><svg class="a" style="left:1012px;top:184px;" width="9" height="9" viewBox="0 0 9 9"><path d="M1.5 1.5l6 6M7.5 1.5l-6 6" stroke="#ddd" stroke-width="2"/></svg><div class="a" style="left:766px;top:196px;width:258px;height:59px;background:#222"></div><div class="t" style="left:770.30px;top:202.18px;font-size:9px;color:#cfcfcf;font-weight:400;transform:scaleX(0.908);">Opacity</div><div class="a" style="left:835px;top:199px;width:150px;height:12px;background:linear-gradient(90deg,#6cb8ee,#54a6e4 50%,#4a9ad8)"></div><div class="t" style="left:989.40px;top:201.58px;font-size:9px;color:#d8d8d8;font-weight:400;transform:scaleX(0.917);">100 %</div><div class="t" style="left:770.30px;top:220.88px;font-size:9px;color:#cfcfcf;font-weight:400;transform:scaleX(0.848);">Blending</div><div class="a" style="left:836px;top:216px;width:183px;height:16px;background:linear-gradient(90deg,#4a4a4a,#444);border-radius:2px"></div><div class="t" style="left:838.60px;top:220.88px;font-size:9px;color:#d8d8d8;font-weight:400;transform:scaleX(0.841);">Normal</div><svg class="a" style="left:1009px;top:222px;" width="7" height="5" viewBox="0 0 7 5"><path d="M0.5 0.5h6l-3 3.5z" fill="#cfcfcf"/></svg><div class="a" style="left:773px;top:240px;width:9px;height:9px;border:1px solid #bdbdbd"></div><div class="t" style="left:785.00px;top:240.38px;font-size:9px;color:#cfcfcf;font-weight:400;transform:scaleX(0.915);">Protect Alpha</div><div class="a" style="left:857px;top:240px;width:9px;height:9px;border:1px solid #bdbdbd"></div><div class="t" style="left:869.60px;top:240.38px;font-size:9px;color:#cfcfcf;font-weight:400;transform:scaleX(0.855);">Clipping</div><div class="a" style="left:941px;top:240px;width:9px;height:9px;border:1px solid #bdbdbd"></div><div class="t" style="left:953.90px;top:240.38px;font-size:9px;color:#cfcfcf;font-weight:400;transform:scaleX(0.841);">Lock</div><div class="a" style="left:767px;top:255px;width:241px;height:116px;background:#4a4846"></div><div class="a" style="left:767px;top:255px;width:241px;height:29px;background:#5f5f5f;border-bottom:1px solid #3a3a3a"></div><div class="t" style="left:832.60px;top:264.94px;font-size:10px;color:#e8e8e8;font-weight:400;transform:scaleX(0.909);">Layer2</div><div class="a" style="left:771px;top:266px;width:8px;height:8px;background:radial-gradient(circle at 40% 40%,#f0f0f0,#bbb);border-radius:50%"></div><div class="a" style="left:794px;top:260px;width:26px;height:19px;background:conic-gradient(#e6e6e6 25%,#fff 0 50%,#e6e6e6 0 75%,#fff 0) 0 0/6px 6px;border:1px solid #ddd"></div><svg class="a" style="left:795px;top:261px;opacity:.3" width="24" height="17" viewBox="0 0 24 17"><g transform="scale(0.041) translate(-152,-74)">
<g fill="none" stroke-linecap="round" stroke-linejoin="round">
<path d="M300.0,205.5 C298.1,207.6 291.9,214.6 288.9,218.2 C285.9,221.8 284.2,223.8 282.2,227.1 C280.2,230.4 278.3,234.7 276.7,238.2 C275.1,241.7 274.0,244.7 272.8,248.2 C271.6,251.7 270.6,254.3 269.4,259.3 C268.2,264.3 266.1,272.6 265.4,278.2 C264.6,283.8 265.1,285.8 264.9,292.7 C264.7,299.6 264.5,312.6 264.3,319.3 C264.1,326.0 263.5,328.4 263.9,332.7 C264.3,337.0 265.6,341.6 266.7,344.9 C267.8,348.2 269.6,350.8 270.6,352.7 C271.7,354.6 274.0,356.7 273.0,356.5 C272.0,356.3 266.9,353.7 264.4,351.6 C261.9,349.5 259.8,347.5 257.8,343.8 C255.8,340.1 253.8,333.9 252.2,329.3 C250.6,324.7 249.2,319.9 248.3,316.0 C247.4,312.1 247.1,310.8 246.6,306.0 C246.1,301.2 245.4,292.7 245.4,287.1 C245.4,281.6 245.9,277.5 246.6,272.7 C247.3,267.9 248.3,262.3 249.4,258.2 C250.5,254.1 251.5,251.7 253.3,248.2 C255.1,244.7 257.4,240.8 260.0,237.1 C262.6,233.4 265.8,229.5 268.9,226.0 C272.0,222.5 275.4,219.2 278.9,216.0 C282.4,212.8 286.5,208.8 290.0,207.1 C293.5,205.3 298.3,205.8 300.0,205.5 Z" fill="#f8827c" stroke="none"/>
<path d="M311.0,361.5 C312.3,361.6 317.9,360.3 319.0,362.0 C320.1,363.7 319.2,365.5 317.8,371.7 C316.4,377.9 313.1,391.5 310.8,399.4 C308.5,407.3 306.2,414.0 303.9,418.9 C301.6,423.8 299.0,427.5 297.0,429.0 C295.0,430.5 292.8,428.8 292.0,428.0 C291.2,427.2 291.3,427.8 292.0,424.0 C292.7,420.2 294.5,411.5 296.0,405.0 C297.5,398.5 299.3,391.0 301.0,385.0 C302.7,379.0 304.3,372.9 306.0,369.0 C307.7,365.1 310.2,362.8 311.0,361.5 Z" fill="#f8827c" stroke="none"/>
<path d="M345,171 C334,174 320,174 313,167 C306,159 308,149 314,145 C322,140 334,145 339,154 C342,160 344,166 345,171 Z" fill="#84e46c" stroke="#000" stroke-width="9"/>
<path d="M345,171 C350,162 353,155 360,150 C368,144 380,143 383,151 C386,160 378,168 368,170 C360,172 352,172 345,171 Z" fill="#84e46c" stroke="#000" stroke-width="9"/>
<path d="M345,171 C345,177 348,182 349.7,187" stroke="#000" stroke-width="9"/>
<path d="M392.0,353.5 C395.3,353.2 406.0,352.6 412.0,351.5 C418.0,350.4 423.8,348.8 428.0,347.0 C432.2,345.2 434.1,344.0 437.0,341.0 C439.9,338.0 443.3,333.8 445.5,329.0 C447.7,324.2 449.1,317.7 450.0,312.0 C450.9,306.3 451.4,301.6 451.0,294.6 C450.6,287.6 449.2,277.5 447.5,270.0 C445.8,262.5 443.6,256.6 441.0,249.4 C438.4,242.2 435.8,233.3 432.0,227.0 C428.2,220.7 422.8,215.4 418.0,211.5 C413.2,207.6 409.1,206.4 403.0,203.5 C396.9,200.6 390.5,196.5 381.7,193.8 C372.9,191.1 360.3,187.7 350.0,187.5 C339.7,187.3 327.7,190.6 320.0,192.6 C312.3,194.6 309.0,196.9 304.0,199.3 C299.0,201.7 294.2,204.3 290.0,207.1 C285.8,209.9 282.4,212.8 278.9,216.0 C275.4,219.2 272.0,222.5 268.9,226.0 C265.8,229.5 262.6,233.4 260.0,237.1 C257.4,240.8 255.1,244.7 253.3,248.2 C251.5,251.7 250.5,254.1 249.4,258.2 C248.3,262.3 247.3,267.9 246.6,272.7 C245.9,277.5 245.4,281.6 245.4,287.1 C245.4,292.7 246.1,301.2 246.6,306.0 C247.1,310.8 247.4,312.1 248.3,316.0 C249.2,319.9 250.6,324.7 252.2,329.3 C253.8,333.9 255.8,340.1 257.8,343.8 C259.8,347.5 261.8,349.2 264.4,351.6 C267.0,354.0 269.6,356.4 273.3,358.2 C277.0,359.9 281.6,361.4 286.7,362.1 C291.8,362.9 299.8,362.7 304.0,362.7 C308.2,362.7 310.7,362.1 312.0,362.0" stroke="#000" stroke-width="9"/>
<path d="M312.0,362.0 C310.9,363.2 307.4,365.1 305.3,369.0 C303.2,372.9 301.3,379.6 299.7,385.6 C298.1,391.6 297.0,398.4 295.6,405.0 C294.2,411.6 292.1,421.7 291.4,425.0" stroke="#000" stroke-width="9"/>
<path d="M433,343 C442,346 445,356 440,362 C434,369 420,373 408,377" stroke="#000" stroke-width="9"/>
<path d="M408,377 L416.7,427" stroke="#000" stroke-width="9"/>
<path d="M343,366 C348,359 355,355 362,356 C372,358 373,367 367,374 C360,381 348,386 337,388" stroke="#000" stroke-width="9"/>
<circle cx="363.6" cy="298" r="9" fill="#000" stroke="none"/>
<circle cx="417.2" cy="280.5" r="9.2" fill="#000" stroke="none"/>
<ellipse cx="349.7" cy="315" rx="9.5" ry="5.6" transform="rotate(-8 349.7 315)" fill="#f20a0a" stroke="none"/>
<ellipse cx="436.4" cy="282" rx="9.5" ry="4.8" transform="rotate(-52 436.4 282)" fill="#f20a0a" stroke="none"/>
<path d="M382.5,294 C383,299 386,301 389,299.5 C391,298 391.5,293 391.4,290 C392.5,294 395,295.5 398,294.5 C402,293 404,289 403.5,286 C403,284 402,283 401,282.5" stroke="#000" stroke-width="12"/>
<path d="M438.75,209.4 C452,205 475,192 486.25,177.2" stroke="#000" stroke-width="9"/>
<path d="M539.7,181.3 C543,185 544,190 543.4,195 C541,225 515,255 487,264.7 C480,266 474,264 471.6,259.4" stroke="#000" stroke-width="9"/>
<path d="M628.75,196 C631,206 628,222 620,235 C606,258 585,272 561,281 C556,283 553,280 555,277.5 C557,275 560,278 559,282 C555,295 535,312 493.4,325" stroke="#000" stroke-width="9"/>
</g>
<g fill="none" stroke="#1ccfee" stroke-width="9" stroke-linecap="round" stroke-linejoin="round">
<path d="M497.8,92.5 C499,91 500.5,90 502,90.5 C503.5,92 503.6,100 503.6,119.3 M503.9,100.9 C505,93 507,87.6 509.3,87.6 C512,87.6 514,89.5 514.6,93.3 C515.3,99 515.6,106 515.8,112.4 M516.2,97.1 C518,91 521,88.3 524.6,88.3 C528,88.3 529.5,92 530,97.1 C530.5,103 530.5,109 531.5,111.6 C532.5,114 535,115 537.5,114.2 C541,113 543,107 543,100.9 C543,95 542.5,90.2 541,90.2 C538.5,90.2 536.8,93 536.8,97.1 C536.8,101 536.8,105 538,109 C539,112 541,114 544,114.7 C548,115.2 551.5,113 554,108.6"/>
<ellipse cx="558.5" cy="102" rx="9.5" ry="8.3"/>
<path d="M578.5,89 L587.2,106.5 M585.5,89 L577.7,110.8"/>
<path d="M598.5,85.6 L599.4,109"/>
<path d="M609.8,83.9 L611.5,110 M619.3,85.6 L611.5,96 L623.7,105.6"/>
<path d="M528.2,131.6 L555,130.8 M525.6,145.5 L556,141.2 M536.9,127.3 L536,151.6 M543.8,127.3 L543,149.9"/>
<path d="M566.4,129 L563.8,153.3 M576.8,123.8 L577.7,156.8 M565,141.5 L577,139.5"/>
<ellipse cx="589" cy="138.5" rx="7.5" ry="12"/>
<path d="M604,121.9 L605.2,152.2"/>
<path d="M616.7,125.5 L618.6,151 M616.7,125.5 C626,128 629,136 627.7,141 C626,147 622,150 618.6,151"/>
<path d="M634.3,124.9 L628.9,154.7 M634.3,124.9 L646.5,153.5 M632,143.1 L647.1,143.1"/>
<path d="M655,125.5 L655,157 M655,125.5 C661,126 665.3,129 665.3,133 C665,139 660,143 656.2,143.7"/>
</g>
<g fill="#1ccfee"><circle cx="597.6" cy="77.8" r="1.5"/><circle cx="604.7" cy="117" r="1.5"/></g>
</g></svg><div class="a" style="left:767px;top:285px;width:241px;height:30px;background:#5f5f5f"></div><div class="a" style="left:782px;top:285px;width:226px;height:30px;background:#4c98d8;border-top:1px solid #1c3a5a;border-bottom:1px solid #1c3a5a"></div><div class="t" style="left:832.60px;top:294.54px;font-size:10px;color:#ffffff;font-weight:700;transform:scaleX(1.023);">Layer2</div><svg class="a" style="left:990px;top:292px;" width="15" height="15" viewBox="0 0 15 15"><path d="M11.91,6.62 L13.92,6.48 L13.92,8.52 L11.91,8.38 L11.24,10.00 L12.76,11.32 L11.32,12.76 L10.00,11.24 L8.38,11.91 L8.52,13.92 L6.48,13.92 L6.62,11.91 L5.00,11.24 L3.68,12.76 L2.24,11.32 L3.76,10.00 L3.09,8.38 L1.08,8.52 L1.08,6.48 L3.09,6.62 L3.76,5.00 L2.24,3.68 L3.68,2.24 L5.00,3.76 L6.62,3.09 L6.48,1.08 L8.52,1.08 L8.38,3.09 L10.00,3.76 L11.32,2.24 L12.76,3.68 L11.24,5.00Z" fill="#fff"/><circle cx="7.5" cy="7.5" r="1.8" fill="#4c98d8"/></svg><div class="a" style="left:771px;top:296px;width:8px;height:8px;background:radial-gradient(circle at 40% 40%,#f0f0f0,#bbb);border-radius:50%"></div><div class="a" style="left:794px;top:290px;width:26px;height:19px;background:conic-gradient(#e6e6e6 25%,#fff 0 50%,#e6e6e6 0 75%,#fff 0) 0 0/6px 6px;border:1px solid #ddd"></div><svg class="a" style="left:795px;top:291px;opacity:.3" width="24" height="17" viewBox="0 0 24 17"><g transform="scale(0.041) translate(-152,-74)">
<g fill="none" stroke-linecap="round" stroke-linejoin="round">
<path d="M300.0,205.5 C298.1,207.6 291.9,214.6 288.9,218.2 C285.9,221.8 284.2,223.8 282.2,227.1 C280.2,230.4 278.3,234.7 276.7,238.2 C275.1,241.7 274.0,244.7 272.8,248.2 C271.6,251.7 270.6,254.3 269.4,259.3 C268.2,264.3 266.1,272.6 265.4,278.2 C264.6,283.8 265.1,285.8 264.9,292.7 C264.7,299.6 264.5,312.6 264.3,319.3 C264.1,326.0 263.5,328.4 263.9,332.7 C264.3,337.0 265.6,341.6 266.7,344.9 C267.8,348.2 269.6,350.8 270.6,352.7 C271.7,354.6 274.0,356.7 273.0,356.5 C272.0,356.3 266.9,353.7 264.4,351.6 C261.9,349.5 259.8,347.5 257.8,343.8 C255.8,340.1 253.8,333.9 252.2,329.3 C250.6,324.7 249.2,319.9 248.3,316.0 C247.4,312.1 247.1,310.8 246.6,306.0 C246.1,301.2 245.4,292.7 245.4,287.1 C245.4,281.6 245.9,277.5 246.6,272.7 C247.3,267.9 248.3,262.3 249.4,258.2 C250.5,254.1 251.5,251.7 253.3,248.2 C255.1,244.7 257.4,240.8 260.0,237.1 C262.6,233.4 265.8,229.5 268.9,226.0 C272.0,222.5 275.4,219.2 278.9,216.0 C282.4,212.8 286.5,208.8 290.0,207.1 C293.5,205.3 298.3,205.8 300.0,205.5 Z" fill="#f8827c" stroke="none"/>
<path d="M311.0,361.5 C312.3,361.6 317.9,360.3 319.0,362.0 C320.1,363.7 319.2,365.5 317.8,371.7 C316.4,377.9 313.1,391.5 310.8,399.4 C308.5,407.3 306.2,414.0 303.9,418.9 C301.6,423.8 299.0,427.5 297.0,429.0 C295.0,430.5 292.8,428.8 292.0,428.0 C291.2,427.2 291.3,427.8 292.0,424.0 C292.7,420.2 294.5,411.5 296.0,405.0 C297.5,398.5 299.3,391.0 301.0,385.0 C302.7,379.0 304.3,372.9 306.0,369.0 C307.7,365.1 310.2,362.8 311.0,361.5 Z" fill="#f8827c" stroke="none"/>
<path d="M345,171 C334,174 320,174 313,167 C306,159 308,149 314,145 C322,140 334,145 339,154 C342,160 344,166 345,171 Z" fill="#84e46c" stroke="#000" stroke-width="9"/>
<path d="M345,171 C350,162 353,155 360,150 C368,144 380,143 383,151 C386,160 378,168 368,170 C360,172 352,172 345,171 Z" fill="#84e46c" stroke="#000" stroke-width="9"/>
<path d="M345,171 C345,177 348,182 349.7,187" stroke="#000" stroke-width="9"/>
<path d="M392.0,353.5 C395.3,353.2 406.0,352.6 412.0,351.5 C418.0,350.4 423.8,348.8 428.0,347.0 C432.2,345.2 434.1,344.0 437.0,341.0 C439.9,338.0 443.3,333.8 445.5,329.0 C447.7,324.2 449.1,317.7 450.0,312.0 C450.9,306.3 451.4,301.6 451.0,294.6 C450.6,287.6 449.2,277.5 447.5,270.0 C445.8,262.5 443.6,256.6 441.0,249.4 C438.4,242.2 435.8,233.3 432.0,227.0 C428.2,220.7 422.8,215.4 418.0,211.5 C413.2,207.6 409.1,206.4 403.0,203.5 C396.9,200.6 390.5,196.5 381.7,193.8 C372.9,191.1 360.3,187.7 350.0,187.5 C339.7,187.3 327.7,190.6 320.0,192.6 C312.3,194.6 309.0,196.9 304.0,199.3 C299.0,201.7 294.2,204.3 290.0,207.1 C285.8,209.9 282.4,212.8 278.9,216.0 C275.4,219.2 272.0,222.5 268.9,226.0 C265.8,229.5 262.6,233.4 260.0,237.1 C257.4,240.8 255.1,244.7 253.3,248.2 C251.5,251.7 250.5,254.1 249.4,258.2 C248.3,262.3 247.3,267.9 246.6,272.7 C245.9,277.5 245.4,281.6 245.4,287.1 C245.4,292.7 246.1,301.2 246.6,306.0 C247.1,310.8 247.4,312.1 248.3,316.0 C249.2,319.9 250.6,324.7 252.2,329.3 C253.8,333.9 255.8,340.1 257.8,343.8 C259.8,347.5 261.8,349.2 264.4,351.6 C267.0,354.0 269.6,356.4 273.3,358.2 C277.0,359.9 281.6,361.4 286.7,362.1 C291.8,362.9 299.8,362.7 304.0,362.7 C308.2,362.7 310.7,362.1 312.0,362.0" stroke="#000" stroke-width="9"/>
<path d="M312.0,362.0 C310.9,363.2 307.4,365.1 305.3,369.0 C303.2,372.9 301.3,379.6 299.7,385.6 C298.1,391.6 297.0,398.4 295.6,405.0 C294.2,411.6 292.1,421.7 291.4,425.0" stroke="#000" stroke-width="9"/>
<path d="M433,343 C442,346 445,356 440,362 C434,369 420,373 408,377" stroke="#000" stroke-width="9"/>
<path d="M408,377 L416.7,427" stroke="#000" stroke-width="9"/>
<path d="M343,366 C348,359 355,355 362,356 C372,358 373,367 367,374 C360,381 348,386 337,388" stroke="#000" stroke-width="9"/>
<circle cx="363.6" cy="298" r="9" fill="#000" stroke="none"/>
<circle cx="417.2" cy="280.5" r="9.2" fill="#000" stroke="none"/>
<ellipse cx="349.7" cy="315" rx="9.5" ry="5.6" transform="rotate(-8 349.7 315)" fill="#f20a0a" stroke="none"/>
<ellipse cx="436.4" cy="282" rx="9.5" ry="4.8" transform="rotate(-52 436.4 282)" fill="#f20a0a" stroke="none"/>
<path d="M382.5,294 C383,299 386,301 389,299.5 C391,298 391.5,293 391.4,290 C392.5,294 395,295.5 398,294.5 C402,293 404,289 403.5,286 C403,284 402,283 401,282.5" stroke="#000" stroke-width="12"/>
<path d="M438.75,209.4 C452,205 475,192 486.25,177.2" stroke="#000" stroke-width="9"/>
<path d="M539.7,181.3 C543,185 544,190 543.4,195 C541,225 515,255 487,264.7 C480,266 474,264 471.6,259.4" stroke="#000" stroke-width="9"/>
<path d="M628.75,196 C631,206 628,222 620,235 C606,258 585,272 561,281 C556,283 553,280 555,277.5 C557,275 560,278 559,282 C555,295 535,312 493.4,325" stroke="#000" stroke-width="9"/>
</g>
<g fill="none" stroke="#1ccfee" stroke-width="9" stroke-linecap="round" stroke-linejoin="round">
<path d="M497.8,92.5 C499,91 500.5,90 502,90.5 C503.5,92 503.6,100 503.6,119.3 M503.9,100.9 C505,93 507,87.6 509.3,87.6 C512,87.6 514,89.5 514.6,93.3 C515.3,99 515.6,106 515.8,112.4 M516.2,97.1 C518,91 521,88.3 524.6,88.3 C528,88.3 529.5,92 530,97.1 C530.5,103 530.5,109 531.5,111.6 C532.5,114 535,115 537.5,114.2 C541,113 543,107 543,100.9 C543,95 542.5,90.2 541,90.2 C538.5,90.2 536.8,93 536.8,97.1 C536.8,101 536.8,105 538,109 C539,112 541,114 544,114.7 C548,115.2 551.5,113 554,108.6"/>
<ellipse cx="558.5" cy="102" rx="9.5" ry="8.3"/>
<path d="M578.5,89 L587.2,106.5 M585.5,89 L577.7,110.8"/>
<path d="M598.5,85.6 L599.4,109"/>
<path d="M609.8,83.9 L611.5,110 M619.3,85.6 L611.5,96 L623.7,105.6"/>
<path d="M528.2,131.6 L555,130.8 M525.6,145.5 L556,141.2 M536.9,127.3 L536,151.6 M543.8,127.3 L543,149.9"/>
<path d="M566.4,129 L563.8,153.3 M576.8,123.8 L577.7,156.8 M565,141.5 L577,139.5"/>
<ellipse cx="589" cy="138.5" rx="7.5" ry="12"/>
<path d="M604,121.9 L605.2,152.2"/>
<path d="M616.7,125.5 L618.6,151 M616.7,125.5 C626,128 629,136 627.7,141 C626,147 622,150 618.6,151"/>
<path d="M634.3,124.9 L628.9,154.7 M634.3,124.9 L646.5,153.5 M632,143.1 L647.1,143.1"/>
<path d="M655,125.5 L655,157 M655,125.5 C661,126 665.3,129 665.3,133 C665,139 660,143 656.2,143.7"/>
</g>
<g fill="#1ccfee"><circle cx="597.6" cy="77.8" r="1.5"/><circle cx="604.7" cy="117" r="1.5"/></g>
</g></svg><div class="a" style="left:767px;top:315px;width:241px;height:29px;background:#5f5f5f;border-bottom:1px solid #3a3a3a"></div><div class="t" style="left:832.60px;top:324.54px;font-size:10px;color:#e8e8e8;font-weight:400;transform:scaleX(0.909);">Layer1</div><div class="a" style="left:771px;top:326px;width:8px;height:8px;background:radial-gradient(circle at 40% 40%,#f0f0f0,#bbb);border-radius:50%"></div><div class="a" style="left:794px;top:320px;width:26px;height:19px;background:conic-gradient(#e6e6e6 25%,#fff 0 50%,#e6e6e6 0 75%,#fff 0) 0 0/6px 6px;border:1px solid #ddd"></div><div class="a" style="left:767px;top:345px;width:241px;height:26px;background:#4a4846"></div><div class="a" style="left:1008px;top:255px;width:15px;height:116px;background:#2b2b2b"></div><svg class="a" style="left:1011px;top:257px;" width="9" height="7" viewBox="0 0 9 7"><path d="M4.5 1 L8 6 H1Z" fill="#cfcfcf"/></svg><div class="a" style="left:1009px;top:264px;width:13px;height:96px;background:linear-gradient(90deg,#858585,#6e6e6e 50%,#626262);border-radius:4px"></div><svg class="a" style="left:1011px;top:364px;" width="9" height="7" viewBox="0 0 9 7"><path d="M4.5 6 L8 1 H1Z" fill="#cfcfcf"/></svg><div class="a" style="left:766px;top:371px;width:258px;height:23px;background:#222"></div><div class="a" style="left:771px;top:374px;width:17px;height:18px;background:#474747;border-radius:2px"></div><svg class="a" style="left:771px;top:374px;" width="17" height="18" viewBox="0 0 17 18"><path d="M5 3.5h5l2.5 2.5v8.5h-7.5z" fill="none" stroke="#e8e8e8" stroke-width="1.1"/></svg><div class="a" style="left:791px;top:374px;width:17px;height:18px;background:#474747;border-radius:2px"></div><svg class="a" style="left:791px;top:374px;" width="17" height="18" viewBox="0 0 17 18"><path d="M5 3.5h5l2.5 2.5v8.5h-7.5z" fill="none" stroke="#e8e8e8" stroke-width="1.1"/><rect x="7" y="9" width="3.5" height="3" fill="none" stroke="#e8e8e8" stroke-width=".9"/></svg><div class="a" style="left:811px;top:374px;width:17px;height:18px;background:#474747;border-radius:2px"></div><svg class="a" style="left:811px;top:374px;" width="17" height="18" viewBox="0 0 17 18"><path d="M5 3.5h5l2.5 2.5v8.5h-7.5z" fill="none" stroke="#e8e8e8" stroke-width="1.1"/><path d="M8.7 13V7.5M7.2 9l1.5-1.5 1.5 1.5" fill="none" stroke="#e8e8e8" stroke-width=".9"/></svg><div class="a" style="left:831px;top:374px;width:23px;height:18px;background:#474747;border-radius:2px"></div><svg class="a" style="left:831px;top:374px;" width="23" height="18" viewBox="0 0 23 18"><path d="M3 3.5h5l2.5 2.5v5" fill="none" stroke="#e8e8e8" stroke-width="1.1"/><path d="M3 3.5v10h4" fill="none" stroke="#e8e8e8" stroke-width="1.1"/><path d="M9 10v6M6 13h6" stroke="#e8e8e8" stroke-width="1.4"/><path d="M15 8.5h5l-2.5 3z" fill="#e8e8e8"/></svg><div class="a" style="left:857px;top:374px;width:17px;height:18px;background:#474747;border-radius:2px"></div><svg class="a" style="left:857px;top:374px;" width="17" height="18" viewBox="0 0 17 18"><path d="M3 5h4l1 1.5h6v7.5H3z" fill="#e8e8e8"/></svg><div class="a" style="left:882px;top:374px;width:17px;height:18px;background:#474747;border-radius:2px"></div><svg class="a" style="left:882px;top:374px;" width="17" height="18" viewBox="0 0 17 18"><rect x="3.5" y="6" width="7.5" height="7.5" fill="none" stroke="#e8e8e8" stroke-width="1.1"/><path d="M5.5 6V4h7.5v7.5h-2" fill="none" stroke="#e8e8e8" stroke-width="1.1"/></svg><div class="a" style="left:903px;top:374px;width:17px;height:18px;background:#474747;border-radius:2px"></div><svg class="a" style="left:903px;top:374px;" width="17" height="18" viewBox="0 0 17 18"><rect x="2.5" y="3.5" width="4.5" height="4" fill="none" stroke="#e8e8e8" stroke-width="1"/><rect x="2.5" y="10" width="4.5" height="4" fill="none" stroke="#e8e8e8" stroke-width="1"/><rect x="10" y="6.5" width="5" height="4.5" fill="#e8e8e8"/><path d="M7 5.5h1.5v7H7M8.5 8.8H10" fill="none" stroke="#e8e8e8" stroke-width="1"/></svg><div class="a" style="left:928px;top:374px;width:17px;height:18px;background:#474747;border-radius:2px"></div><svg class="a" style="left:928px;top:374px;" width="17" height="18" viewBox="0 0 17 18"><path d="M3.5 5.5h10" stroke="#e8e8e8" stroke-width="1.2"/><path d="M6.5 5V3.5h4V5" fill="none" stroke="#e8e8e8" stroke-width="1"/><path d="M4.5 6.5h8v8h-8z" fill="none" stroke="#e8e8e8" stroke-width="1.1"/><path d="M7 8v5M10 8v5" stroke="#e8e8e8" stroke-width="1"/></svg><div class="a" style="left:878px;top:378px;width:1px;height:10px;background:#555"></div><div class="a" style="left:923.5px;top:378px;width:1px;height:10px;background:#555"></div><div class="a" style="left:766px;top:394px;width:258px;height:6px;background:#1e1e1e"></div><div class="a" style="left:766px;top:400px;width:258px;height:16px;background:linear-gradient(#243242 0,#2f3440 30%,#3a3434 60%,#363434)"></div><div class="a" style="left:766px;top:400px;width:258px;height:1px;background:#7896b4"></div><div class="t" style="left:865.70px;top:403.98px;font-size:9px;color:#d8d8d8;font-weight:400;transform:scaleX(0.827);">Brush Size</div><svg class="a" style="left:1000px;top:404px;" width="9" height="9" viewBox="0 0 9 9"><rect x="1" y="2.5" width="5.5" height="5.5" fill="none" stroke="#bbb" stroke-width="1"/><path d="M5 4.5L8 1.5M6 1.5h2v2" fill="none" stroke="#bbb" stroke-width="1"/></svg><svg class="a" style="left:1012px;top:404px;" width="9" height="9" viewBox="0 0 9 9"><path d="M1.5 1.5l6 6M7.5 1.5l-6 6" stroke="#ddd" stroke-width="2"/></svg><div class="a" style="left:766px;top:416px;width:243px;height:113px;background:#3a3a3a"></div><div class="a" style="left:768px;top:416px;width:28px;height:36px;background:#5c5c5c"></div><div class="a" style="left:781px;top:430px;width:1px;height:1px;background:#f0f0f0;border-radius:50%;opacity:0.35"></div><div class="t" style="left:780.05px;top:444.23px;font-size:8px;color:#f2f2f2;font-weight:400;transform:scaleX(0.786);">1</div><div class="a" style="left:797px;top:416px;width:28px;height:36px;background:#5c5c5c"></div><div class="a" style="left:811px;top:430px;width:1px;height:1px;background:#f0f0f0;border-radius:50%;opacity:0.35"></div><div class="t" style="left:805.65px;top:444.23px;font-size:8px;color:#f2f2f2;font-weight:400;transform:scaleX(1.079);">1.5</div><div class="a" style="left:827px;top:416px;width:28px;height:36px;background:#5c5c5c"></div><div class="a" style="left:841px;top:429px;width:2px;height:2px;background:#f0f0f0;border-radius:50%;opacity:1"></div><div class="t" style="left:839.75px;top:444.23px;font-size:8px;color:#f2f2f2;font-weight:400;transform:scaleX(0.786);">2</div><div class="a" style="left:857px;top:416px;width:28px;height:36px;background:#5c5c5c"></div><div class="a" style="left:870px;top:429px;width:3px;height:3px;background:#f0f0f0;border-radius:50%;opacity:1"></div><div class="t" style="left:869.60px;top:444.23px;font-size:8px;color:#f2f2f2;font-weight:400;transform:scaleX(0.786);">3</div><div class="a" style="left:887px;top:416px;width:28px;height:36px;background:#5c5c5c"></div><div class="a" style="left:899px;top:428px;width:4px;height:4px;background:#f0f0f0;border-radius:50%;opacity:1"></div><div class="t" style="left:899.45px;top:444.23px;font-size:8px;color:#f2f2f2;font-weight:400;transform:scaleX(0.786);">4</div><div class="a" style="left:917px;top:416px;width:28px;height:36px;background:#5c5c5c"></div><div class="a" style="left:929px;top:428px;width:4px;height:4px;background:#f0f0f0;border-radius:50%;opacity:1"></div><div class="t" style="left:929.30px;top:444.23px;font-size:8px;color:#f2f2f2;font-weight:400;transform:scaleX(0.786);">5</div><div class="a" style="left:947px;top:416px;width:28px;height:36px;background:#5c5c5c"></div><div class="a" style="left:958px;top:427px;width:6px;height:6px;background:#f0f0f0;border-radius:50%;opacity:1"></div><div class="t" style="left:959.15px;top:444.23px;font-size:8px;color:#f2f2f2;font-weight:400;transform:scaleX(0.786);">7</div><div class="a" style="left:977px;top:416px;width:28px;height:36px;background:#5c5c5c"></div><div class="a" style="left:986px;top:426px;width:9px;height:9px;background:#f0f0f0;border-radius:50%;opacity:1"></div><div class="t" style="left:986.75px;top:444.23px;font-size:8px;color:#f2f2f2;font-weight:400;transform:scaleX(0.898);">10</div><div class="a" style="left:768px;top:454px;width:28px;height:36px;background:#5c5c5c"></div><div class="a" style="left:777px;top:463px;width:10px;height:10px;background:#f0f0f0;border-radius:50%;opacity:1"></div><div class="t" style="left:777.80px;top:481.73px;font-size:8px;color:#f2f2f2;font-weight:400;transform:scaleX(0.898);">12</div><div class="a" style="left:797px;top:454px;width:28px;height:36px;background:#5c5c5c"></div><div class="a" style="left:806px;top:462px;width:12px;height:12px;background:#f0f0f0;border-radius:50%;opacity:1"></div><div class="t" style="left:807.65px;top:481.73px;font-size:8px;color:#f2f2f2;font-weight:400;transform:scaleX(0.898);">15</div><div class="a" style="left:827px;top:454px;width:28px;height:36px;background:#5c5c5c"></div><div class="a" style="left:834px;top:460px;width:16px;height:16px;background:#f0f0f0;border-radius:50%;opacity:1"></div><div class="t" style="left:837.50px;top:481.73px;font-size:8px;color:#f2f2f2;font-weight:400;transform:scaleX(0.898);">20</div><div class="a" style="left:857px;top:454px;width:28px;height:36px;background:#5c5c5c"></div><div class="a" style="left:862px;top:459px;width:18px;height:18px;background:#f0f0f0;border-radius:50%;opacity:1"></div><div class="t" style="left:867.35px;top:481.73px;font-size:8px;color:#f2f2f2;font-weight:400;transform:scaleX(0.898);">25</div><div class="a" style="left:887px;top:454px;width:28px;height:36px;background:#5c5c5c"></div><div class="a" style="left:892px;top:459px;width:18px;height:18px;background:#f0f0f0;border-radius:50%;opacity:1"></div><div class="t" style="left:897.20px;top:481.73px;font-size:8px;color:#f2f2f2;font-weight:400;transform:scaleX(0.898);">30</div><div class="a" style="left:917px;top:454px;width:28px;height:36px;background:#5c5c5c"></div><div class="a" style="left:922px;top:459px;width:18px;height:18px;background:#f0f0f0;border-radius:50%;opacity:1"></div><div class="t" style="left:927.05px;top:481.73px;font-size:8px;color:#f2f2f2;font-weight:400;transform:scaleX(0.898);">40</div><div class="a" style="left:947px;top:454px;width:28px;height:36px;background:#5c5c5c"></div><div class="a" style="left:952px;top:459px;width:18px;height:18px;background:#f0f0f0;border-radius:50%;opacity:1"></div><div class="t" style="left:956.90px;top:481.73px;font-size:8px;color:#f2f2f2;font-weight:400;transform:scaleX(0.898);">50</div><div class="a" style="left:977px;top:454px;width:28px;height:36px;background:#5c5c5c"></div><div class="a" style="left:982px;top:459px;width:18px;height:18px;background:#f0f0f0;border-radius:50%;opacity:1"></div><div class="t" style="left:986.75px;top:481.73px;font-size:8px;color:#f2f2f2;font-weight:400;transform:scaleX(0.898);">70</div><div class="a" style="left:768px;top:491px;width:28px;height:36px;background:#5c5c5c"></div><div class="a" style="left:773px;top:496px;width:18px;height:18px;background:#f0f0f0;border-radius:50%;opacity:1"></div><div class="t" style="left:775.80px;top:519.23px;font-size:8px;color:#f2f2f2;font-weight:400;transform:scaleX(0.898);">100</div><div class="a" style="left:797px;top:491px;width:28px;height:36px;background:#5c5c5c"></div><div class="a" style="left:803px;top:496px;width:18px;height:18px;background:#f0f0f0;border-radius:50%;opacity:1"></div><div class="t" style="left:805.65px;top:519.23px;font-size:8px;color:#f2f2f2;font-weight:400;transform:scaleX(0.898);">150</div><div class="a" style="left:827px;top:491px;width:28px;height:36px;background:#5c5c5c"></div><div class="a" style="left:833px;top:496px;width:18px;height:18px;background:#f0f0f0;border-radius:50%;opacity:1"></div><div class="t" style="left:835.50px;top:519.23px;font-size:8px;color:#f2f2f2;font-weight:400;transform:scaleX(0.898);">200</div><div class="a" style="left:857px;top:491px;width:28px;height:36px;background:#5c5c5c"></div><div class="a" style="left:862px;top:496px;width:18px;height:18px;background:#f0f0f0;border-radius:50%;opacity:1"></div><div class="t" style="left:865.35px;top:519.23px;font-size:8px;color:#f2f2f2;font-weight:400;transform:scaleX(0.898);">300</div><div class="a" style="left:887px;top:491px;width:28px;height:36px;background:#5c5c5c"></div><div class="a" style="left:892px;top:496px;width:18px;height:18px;background:#f0f0f0;border-radius:50%;opacity:1"></div><div class="t" style="left:895.20px;top:519.23px;font-size:8px;color:#f2f2f2;font-weight:400;transform:scaleX(0.898);">400</div><div class="a" style="left:917px;top:491px;width:28px;height:36px;background:#5c5c5c"></div><div class="a" style="left:922px;top:496px;width:18px;height:18px;background:#f0f0f0;border-radius:50%;opacity:1"></div><div class="t" style="left:925.05px;top:519.23px;font-size:8px;color:#f2f2f2;font-weight:400;transform:scaleX(0.898);">500</div><div class="a" style="left:947px;top:491px;width:28px;height:36px;background:#5c5c5c"></div><div class="a" style="left:952px;top:496px;width:18px;height:18px;background:#f0f0f0;border-radius:50%;opacity:1"></div><div class="t" style="left:954.90px;top:519.23px;font-size:8px;color:#f2f2f2;font-weight:400;transform:scaleX(0.898);">700</div><div class="a" style="left:977px;top:491px;width:28px;height:36px;background:#5c5c5c"></div><div class="a" style="left:982px;top:496px;width:18px;height:18px;background:#f0f0f0;border-radius:50%;opacity:1"></div><div class="t" style="left:982.50px;top:519.23px;font-size:8px;color:#f2f2f2;font-weight:400;transform:scaleX(0.927);">1000</div><div class="a" style="left:1009px;top:416px;width:15px;height:113px;background:#2b2b2b"></div><svg class="a" style="left:1012px;top:417px;" width="9" height="7" viewBox="0 0 9 7"><path d="M4.5 1 L8 6 H1Z" fill="#cfcfcf"/></svg><div class="a" style="left:1010px;top:424px;width:12px;height:97px;background:linear-gradient(90deg,#858585,#6e6e6e 50%,#626262);border-radius:4px"></div><svg class="a" style="left:1012px;top:522px;" width="9" height="7" viewBox="0 0 9 7"><path d="M4.5 6 L8 1 H1Z" fill="#cfcfcf"/></svg><div class="a" style="left:766px;top:529px;width:258px;height:1px;background:#1e1e1e"></div><div class="a" style="left:0px;top:530px;width:1024px;height:17px;background:#242424"></div><div class="t" style="left:3.90px;top:534.46px;font-size:9.5px;color:#cfcfcf;font-weight:400;transform:scaleX(0.883);">1600 * 1200 pixel</div><div class="t" style="left:75.80px;top:534.46px;font-size:9.5px;color:#cfcfcf;font-weight:400;transform:scaleX(0.909);">(11.6 * 8.7cm)</div><div class="t" style="left:136.50px;top:534.46px;font-size:9.5px;color:#cfcfcf;font-weight:400;transform:scaleX(0.914);">350 dpi</div><div class="t" style="left:171.40px;top:534.46px;font-size:9.5px;color:#cfcfcf;font-weight:400;transform:scaleX(0.882);">48 %</div><div class="t" style="left:197.40px;top:534.46px;font-size:9.5px;color:#cfcfcf;font-weight:400;transform:scaleX(0.862);">( 808, 803 )</div><div class="t" style="left:245.90px;top:534.46px;font-size:9.5px;color:#cfcfcf;font-weight:400;transform:scaleX(0.946);">Draw a straight line by holding down Shift, Change a brush size by holding down Ctrl, Alt, and dragging</div><div class="a" style="left:0px;top:547px;width:1024px;height:29px;background:radial-gradient(ellipse 200px 30px at 420px 560px,rgba(40,44,90,.5),rgba(0,0,0,0)),radial-gradient(ellipse 200px 30px at 780px 565px,rgba(40,44,90,.4),rgba(0,0,0,0)),linear-gradient(#0e1030,#0a0b24 50%,#08081c)"></div><div class="a" style="left:0px;top:547px;width:1024px;height:1px;background:#3a3c58"></div><svg class="a" style="left:4px;top:547px;" width="32" height="29" viewBox="0 0 32 29"><defs><linearGradient id="orb" x1="0" y1="0" x2="0" y2="1"><stop offset="0" stop-color="#a8c0d0"/><stop offset=".45" stop-color="#3a78b0"/><stop offset=".55" stop-color="#1a5aa0"/><stop offset="1" stop-color="#30d0f0"/></linearGradient></defs><circle cx="16" cy="14.5" r="13.3" fill="url(#orb)" stroke="#7090b0" stroke-width=".8"/><path d="M9.5 8.5 C11 7.5 13 7.5 15 8.5 L14.5 14 C12.5 13 10.5 13 9 14Z" fill="#f06a2a"/><path d="M16 8.8 C18 9.8 20 9.8 22 9 L21.5 14.5 C19.5 15.3 17.5 15.3 15.5 14.3Z" fill="#90c040"/><path d="M9 15 C10.5 14 12.5 14 14.5 15 L14 20.5 C12 19.5 10 19.5 8.5 20.5Z" fill="#40a0e8"/><path d="M15.5 15.3 C17.5 16.3 19.5 16.3 21.5 15.5 L21 21 C19 21.8 17 21.8 15 20.8Z" fill="#f8b830"/><ellipse cx="16" cy="7" rx="9" ry="4.5" fill="#fff" opacity=".18"/></svg><svg class="a" style="left:66px;top:551px;" width="26" height="22" viewBox="0 0 26 22"><path d="M3 3 L13 11 L3 19Z" fill="#7a3fd8"/><path d="M23 3 L13 11 L23 19Z" fill="#c8b0f8"/></svg><svg class="a" style="left:111px;top:548px;" width="28" height="28" viewBox="0 0 28 28"><defs><linearGradient id="iee" x1="0" y1="0" x2="0" y2="1"><stop offset="0" stop-color="#60d0ff"/><stop offset="1" stop-color="#1060c0"/></linearGradient></defs><path d="M6.5 14.5 h13.5 C20.5 9 17 6 13.5 6 C9 6 5.5 9.5 5.5 14.5 C5.5 19 9 22.5 13.5 22.5 C16.5 22.5 19 21 20.5 18.5" fill="none" stroke="url(#iee)" stroke-width="3.6"/><path d="M3 23 C1 20 8 12 16 8 C22 5 26 4 25.5 6.5" fill="none" stroke="#f0c030" stroke-width="1.8"/></svg><div class="a" style="left:151px;top:548px;width:43px;height:28px;background:linear-gradient(#6a6a80,#3a3a55 50%,#2c2c48);border:1px solid #7a7a90;border-radius:3px"></div><div class="a" style="left:196px;top:548px;width:43px;height:28px;background:linear-gradient(#6a6a80,#3a3a55 50%,#2c2c48);border:1px solid #7a7a90;border-radius:3px"></div><div class="a" style="left:243px;top:548px;width:43px;height:28px;background:linear-gradient(#a0a0b0,#7a7a90 50%,#6a6a82);border:1px solid #7a7a90;border-radius:3px"></div><div class="a" style="left:289px;top:548px;width:43px;height:28px;background:linear-gradient(#6a6a80,#3a3a55 50%,#2c2c48);border:1px solid #7a7a90;border-radius:3px"></div><svg class="a" style="left:159px;top:549px;" width="28" height="26" viewBox="0 0 28 26"><circle cx="13" cy="14" r="10" fill="#5aaa3a" stroke="#e0f0d0" stroke-width="1"/><circle cx="13" cy="14" r="5" fill="none" stroke="#e8f8e0" stroke-width="2.5"/><path d="M15 5 L18 2 M18 8 L23 5 M20 11 L25 10" stroke="#f26a2a" stroke-width="2"/></svg><svg class="a" style="left:204px;top:549px;" width="28" height="26" viewBox="0 0 28 26"><circle cx="14" cy="13.5" r="10" fill="#dd3b2c"/><path d="M14 13.5 L5.3 18.5 A10 10 0 0 0 19 22.2Z" fill="#2ba24c"/><path d="M14 13.5 L19 22.2 A10 10 0 0 0 22.7 8.5 L14 8.5Z" fill="#fcc934"/><circle cx="14" cy="13.5" r="4.5" fill="#fff"/><circle cx="14" cy="13.5" r="3.5" fill="#4a8af0"/></svg><div class="a" style="left:253px;top:549px;width:24px;height:24px;background:#f6f6f8;border-radius:5px"></div><svg class="a" style="left:253px;top:549px;" width="24" height="24" viewBox="0 0 24 24"><defs><linearGradient id="mbd" x1="0" y1="0" x2=".6" y2="1"><stop offset="0" stop-color="#1aa8c8"/><stop offset=".55" stop-color="#22d0e0"/><stop offset="1" stop-color="#30c030"/></linearGradient><linearGradient id="mbr" x1="0" y1="1" x2="1" y2="0"><stop offset="0" stop-color="#e01a2a"/><stop offset="1" stop-color="#f89a30"/></linearGradient></defs><path d="M13.5 3.5 C18 7 19.5 11 19 14.5 C18.5 19 15 21.5 11.5 21.5 C7.5 21.5 5 18.5 5 15 C5 10 9 6 13.5 3.5Z" fill="url(#mbd)"/><path d="M13.5 3.5 C10 5.5 6.5 8.5 5.3 13 C8 12 12 12 16 11 C16 8 15 5.5 13.5 3.5Z" fill="url(#mbr)"/></svg><svg class="a" style="left:297px;top:549px;" width="28" height="26" viewBox="0 0 28 26"><ellipse cx="13" cy="15" rx="10" ry="7" fill="#d8e8f8" stroke="#9ab" stroke-width="1"/><circle cx="9" cy="13" r="1.8" fill="#e84a4a"/><circle cx="13" cy="11.5" r="1.8" fill="#f0c030"/><circle cx="17" cy="12.5" r="1.8" fill="#4aa0e0"/><circle cx="10" cy="17.5" r="1.8" fill="#5ab84a"/><path d="M24 2 L15 20" stroke="#d8903a" stroke-width="2"/></svg><div class="t" style="left:923.00px;top:555.08px;font-size:9px;color:#d0d0e0;font-weight:400;transform:scaleX(0.879);">EN</div><svg class="a" style="left:945px;top:558px;" width="9" height="6" viewBox="0 0 9 6"><path d="M4.5 1 L8 5 H1Z" fill="#e8e8f0"/></svg><div class="t" style="left:967.00px;top:548.98px;font-size:9px;color:#e0e0ea;font-weight:400;transform:scaleX(0.954);">1:18 PM</div><div class="t" style="left:963.60px;top:562.88px;font-size:9px;color:#e0e0ea;font-weight:400;transform:scaleX(0.949);">7/16/2021</div><div class="a" style="left:1013px;top:548px;width:10px;height:28px;background:linear-gradient(90deg,#3a3c58,#6a6c88 50%,#3a3c58);border:1px solid #555770"></div>
</body></html>
